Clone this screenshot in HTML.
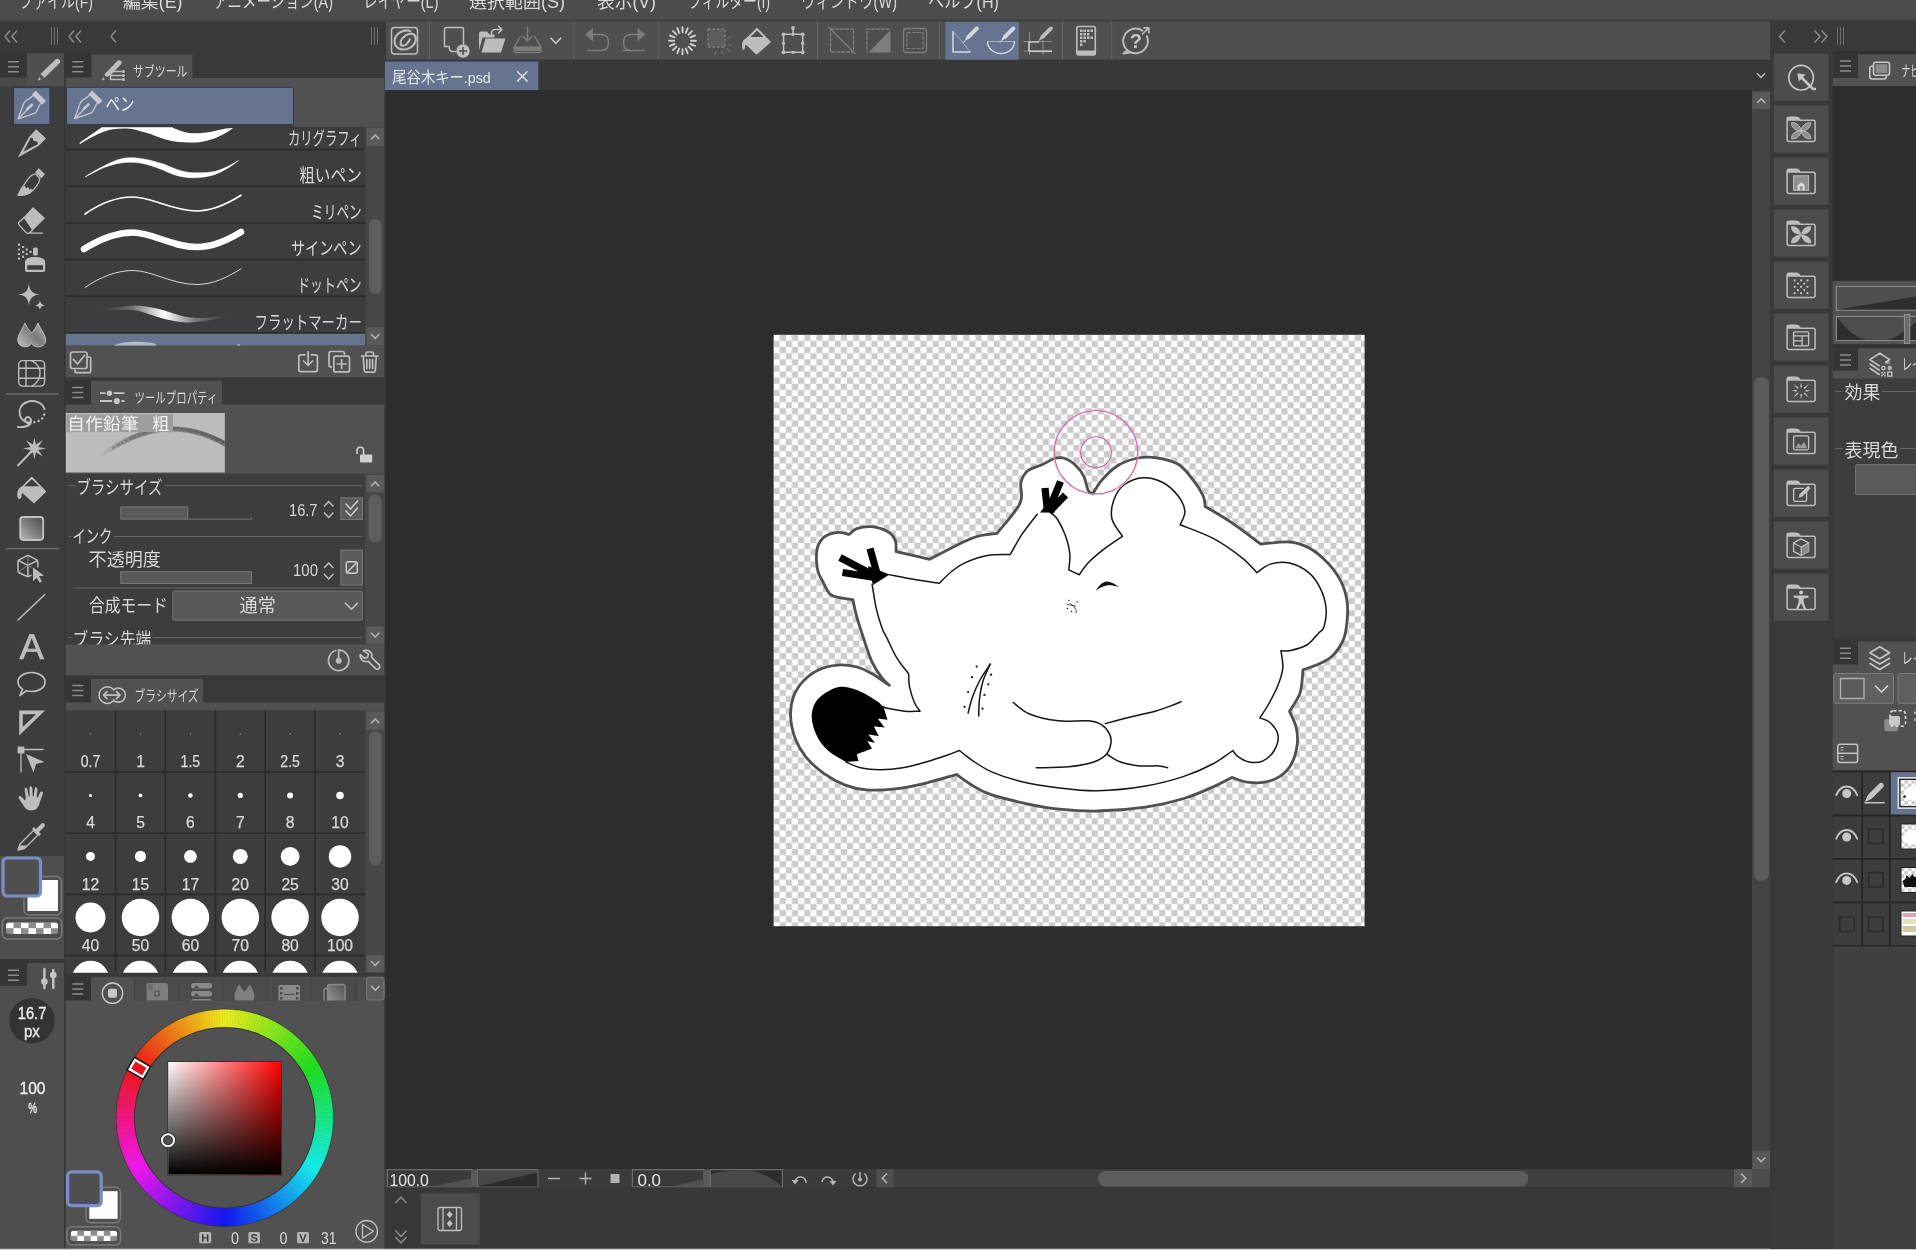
<!DOCTYPE html>
<html lang="ja">
<head>
<meta charset="utf-8">
<title>CLIP STUDIO PAINT</title>
<style>
html,body{margin:0;padding:0;}
body{width:1916px;height:1250px;overflow:hidden;position:relative;background:#393939;
 font-family:"Liberation Sans","Noto Sans CJK JP",sans-serif;color:#d6d6d6;font-size:14px;}
.a{position:absolute;}
.b{position:absolute;box-sizing:border-box;}
svg{position:absolute;overflow:visible;}
.ic{stroke:#bdbdbd;fill:none;stroke-width:1.6;stroke-linecap:round;stroke-linejoin:round;}
.fl{fill:#bdbdbd;stroke:none;}
.t{position:absolute;white-space:nowrap;line-height:1;}
.hdrbox{position:absolute;background:#353535;}
.tab{position:absolute;background:#525252;}
.ham{position:absolute;width:11px;height:1.5px;background:#8a8a8a;box-shadow:0 5px 0 #8a8a8a,0 10px 0 #8a8a8a;}
</style>
</head>
<body>
<svg width="1916" height="1250" viewBox="0 0 1916 1250" style="left:0;top:0;filter:blur(0.45px)">
<defs>
<pattern id="chk" x="773.6" y="334.8" width="12.236" height="12.242" patternUnits="userSpaceOnUse">
<rect width="12.236" height="12.242" fill="#fdfdfd"/>
<rect x="6.118" width="6.118" height="6.121" fill="#cbcbcb"/>
<rect y="6.121" width="6.118" height="6.121" fill="#cbcbcb"/>
</pattern>
<linearGradient id="gdiag" x1="0" y1="1" x2="1" y2="0"><stop offset="0" stop-color="#bcbcbc"/><stop offset=".500" stop-color="#7c7c7c"/><stop offset="1" stop-color="#484848"/></linearGradient>
<g id="ham"><path d="M0 0h11M0 5h11M0 10h11" stroke="#8c8c8c" stroke-width="1.5" fill="none"/></g>
<g id="up"><path d="M-4.100 2.200L0 -2L4.100 2.200" stroke="#b8b8b8" stroke-width="1.5" fill="none"/></g>
<g id="dn"><path d="M-4.100 -2.200L0 2L4.100 -2.200" stroke="#b8b8b8" stroke-width="1.5" fill="none"/></g>
</defs>
<style>
text{font-family:"Liberation Sans","Noto Sans CJK JP",sans-serif;fill:#d8d8d8;}
.i{stroke:#bdbdbd;fill:none;stroke-width:1.6;stroke-linecap:round;stroke-linejoin:round}
.f{fill:#bdbdbd;stroke:none}
.d{stroke:#7d7d7d;fill:none;stroke-width:1.6;stroke-linecap:round;stroke-linejoin:round}
.df{fill:#7d7d7d;stroke:none}
</style>
<!-- base -->
<rect width="1916" height="1250" fill="#393939"/>
<!-- menu bar -->
<rect width="1916" height="19.800" fill="#4c4c4c"/>
<rect y="19.800" width="1916" height="2" fill="#404040"/>
<g font-size="18">
<text x="19" y="8.300" textLength="74" lengthAdjust="spacingAndGlyphs">ファイル(F)</text>
<text x="123" y="8.300" textLength="59.5" lengthAdjust="spacingAndGlyphs">編集(E)</text>
<text x="213.5" y="8.300" textLength="119.5" lengthAdjust="spacingAndGlyphs">アニメーション(A)</text>
<text x="363" y="8.300" textLength="75.5" lengthAdjust="spacingAndGlyphs">レイヤー(L)</text>
<text x="469" y="8.300" textLength="96" lengthAdjust="spacingAndGlyphs">選択範囲(S)</text>
<text x="597" y="8.300" textLength="59" lengthAdjust="spacingAndGlyphs">表示(V)</text>
<text x="688" y="8.300" textLength="82" lengthAdjust="spacingAndGlyphs">フィルター(I)</text>
<text x="801" y="8.300" textLength="96" lengthAdjust="spacingAndGlyphs">ウィンドウ(W)</text>
<text x="928" y="8.300" textLength="71" lengthAdjust="spacingAndGlyphs">ヘルプ(H)</text>
</g>
<!-- left top strip -->
<g stroke="#8a8a8a" stroke-width="1.5" fill="none">
<path d="M10 30.5L5 36.5L10 42.5M17 30.5L12 36.5L17 42.5"/>
<path d="M74 30.5L69 36.5L74 42.5M81 30.5L76 36.5L81 42.5"/>
<path d="M116 30.5L111 36.5L116 42.5"/>
</g>
<g stroke="#6f6f6f" stroke-width="1" fill="none">
<path d="M51.5 27v18M54.5 27v18M57.5 27v18"/>
<path d="M371.5 27v18M374.5 27v18M377.5 27v18"/>
</g>
<!-- ===== tool palette ===== -->
<rect x="0" y="53" width="64" height="33" fill="#4a4a4a"/>
<rect x="0" y="53" width="27" height="24.5" fill="#353535"/>
<rect x="27" y="54.300" width="37" height="31.700" fill="#4f4f4f"/>
<use href="#ham" x="8" y="61.7"/>
<path d="M38 80.5l2.5-6.5 15-14.5c1.2-1.2 3-1 4 .2 1 1.200 1 2.800-.2 3.800l-15 14.500z" class="f"/>
<path d="M38 80.500l2.500-6.500 4 4z" fill="#4f4f4f"/><path d="M38 80.500l1.200-3.200 2 2z" class="f"/>
<rect x="0" y="86" width="64" height="770" fill="#3d3d3d"/>
<rect x="64" y="53" width="1.500" height="1197" fill="#343434"/>
<!-- pen selected -->
<rect x="13.500" y="87.500" width="36.500" height="37" fill="#67748f" stroke="#303850" stroke-width="1.200"/>
<g>
<path class="i" d="M18 119L23.800 103.200Q24.200 102 25.300 101.200L34.600 94.600M18 119L34.300 113.400Q35.500 113 36.200 111.800L40.300 104M18.500 118.500L29.500 107.500" style="stroke:#c4c8d4;stroke-width:1.300"/>
<path d="M27.300 109L32 104.800" stroke="#c4c8d4" stroke-width="2.600" stroke-linecap="round"/>
<path d="M35.600 90.800L46 101L42 104.800L32 94.600z" fill="#c4c8d4"/>
</g>
<!-- pencil -->
<path class="f" fill-rule="evenodd" d="M17.800 157.500L29 137L36.200 129.200L46 138.400L38.800 145.800zM23.300 151.800L30.600 138Q32.600 136.600 33 139Q33 141.500 35.500 141.200Q37.600 140.800 37.700 143.200L37.800 144.200z"/>
<!-- brush -->
<path class="i" d="M18 195.300C19.500 191 22 187 24.700 183.800C27 180.500 29 177.500 31.100 175.800C32.500 174.600 34 174 35.600 173.800L39.800 178.500C39.800 181 38.500 183.500 36.900 185.700C35 188.500 32 191.500 29.200 193.400C26 195 22 195.600 18 195.300z" style="stroke-width:1.300"/>
<path class="f" d="M18 195.300C19.500 191 22 187.500 24.800 185.800L26.300 188.300L28.300 186.800L29.300 189.800L31.300 188.200L31.800 190.300L33.800 189.300C32 191.500 30.500 192.600 29.200 193.400C26 195 22 195.600 18 195.300z"/>
<path class="f" d="M38.800 168.200L45 174.200L41.400 178.200L35.200 172.200z"/>
<!-- eraser -->
<path class="f" d="M33 207L45 218.300L32.500 230.500L23.500 217.500z"/>
<path class="i" d="M23.800 217.700L18.800 222.500Q17.800 223.500 18.800 224.600L26.600 233.100L29.200 233.100L32.500 230M26.600 233.100L42.600 233.100" style="stroke-width:1.300"/>
<!-- airbrush -->
<g class="f">
<rect x="33" y="247.600" width="4.800" height="8" rx="1.500"/>
<path fill-rule="evenodd" d="M25 262.500C25 258.500 29 257 35.100 257S45.200 258.500 45.200 262.500V270Q45.200 272 43.200 272H27Q25 272 25 270zM27.300 265.200H43V269.700H27.300z"/>
<rect x="17.900" y="243.600" width="2.200" height="2.200" rx=".6"/><rect x="22" y="245.900" width="2.200" height="2.200" rx=".6"/><rect x="17.900" y="248.400" width="2.200" height="2.200" rx=".6"/><rect x="25.700" y="248.400" width="2.200" height="2.200" rx=".6"/><rect x="22" y="250.700" width="2.200" height="2.200" rx=".6"/><rect x="29.500" y="250.700" width="2.200" height="2.200" rx=".6"/><rect x="17.900" y="252.900" width="2.200" height="2.200" rx=".6"/><rect x="25.700" y="252.900" width="2.200" height="2.200" rx=".6"/><rect x="22" y="255.500" width="2.200" height="2.200" rx=".6"/><rect x="17.900" y="257.500" width="2.200" height="2.200" rx=".6"/>
</g>
<!-- sparkle -->
<path class="f" d="M28.900 283Q29.400 294.200 40.200 294.600Q29.400 295 28.900 306Q28.400 295 17.600 294.600Q28.400 294.200 28.900 283zM28.900 288.500Q28.900 294.600 34 294.600Q28.900 294.600 28.900 300.500Q28.900 294.600 23.500 294.600Q28.900 294.600 28.900 288.500zM39.900 300.300Q40.200 305 45.200 305.200Q40.200 305.400 39.900 310.400Q39.600 305.400 34.800 305.200Q39.600 305 39.900 300.300z"/>
<!-- blend -->
<linearGradient id="gbl" x1="0" y1="1" x2="1" y2="0.200"><stop offset="0" stop-color="#c2c2c2"/><stop offset="0.600" stop-color="#7a7a7a"/><stop offset="1" stop-color="#b0b0b0"/></linearGradient>
<path d="M25 323C22 330 17.800 335 17.800 340C17.800 345 22 346.800 25.500 346.800C28 346.800 30.500 345.500 31.600 343.500C32.700 345.500 35 346.800 38 346.800C42 346.800 45.600 345 45.600 340C45.600 335 41 330 38 323C36 328 33.500 331 31.600 333C29.500 331 27 328 25 323z" fill="url(#gbl)" stroke="#bdbdbd" stroke-width="1"/>
<!-- mesh -->
<g class="i" style="stroke-width:1.400">
<rect x="18.700" y="360.600" width="25.900" height="25.500" rx="4"/>
<path d="M26 360.600v25.500M18.700 368.200h25.900M18.700 378.200h25.900M32.100 360.800C37.500 364 40.100 368 40.100 372.500C40.100 378 37 383 32.400 386"/>
</g>
<!-- separators -->
<rect x="6" y="393.300" width="53" height="1.500" fill="#6a6a6a"/>
<rect x="6" y="547.800" width="53" height="1.500" fill="#6a6a6a"/>
<!-- lasso -->
<g class="i" style="stroke-width:1.900">
<path d="M44.500 409C42.500 402.500 34 399.500 27 402C20.500 404.500 18.500 410 20 415.500C21.500 420 25.500 422.700 30.500 422.500"/>
<path d="M44.300 413.500C44 417 41.500 419.800 38.500 421C36 422 33.500 422.400 31.500 422.500" stroke-width="2.300" stroke-dasharray="2 2.300" stroke-linecap="butt"/>
<path d="M30.500 422.500C32.500 418 27.500 415.500 25.500 418.500C23.500 422 29 424.500 30.800 422.500C30 426 24 427.500 18 427"/>
</g>
<!-- wand -->
<path class="i" d="M18 465.500L32 451" style="stroke-width:1.900"/>
<path class="f" d="M34.400 437.500L35.900 444.600L42.800 440.200L38.200 446.900L46 448.400L38.200 449.900L42.800 456.600L35.900 452.200L34.400 459.500L32.900 452.200L26 456.600L30.600 449.900L23 448.400L30.600 446.900L26 440.200L32.900 444.600z"/>
<!-- bucket -->
<path d="M31.800 477.500L45.300 491.500L34 502.500L23.500 493Q20.800 491.500 20.800 495Q20.800 498.300 19.300 498.300Q18 498.300 18 494Q18 489 22.500 487z" fill="#bdbdbd" stroke="#bdbdbd" stroke-width="1.600" stroke-linejoin="round"/>
<path d="M31.800 479.200L24.300 486.300h15z" fill="#3d3d3d"/>
<!-- gradient -->
<rect x="20.200" y="517" width="23" height="23" rx="3.200" fill="url(#gdiag)" stroke="#c2c2c2" stroke-width="1.800"/>
<!-- 3d cube + cursor -->
<g class="i" style="stroke-width:1.500">
<path d="M37.800 567V561.500Q37.800 560.400 36.800 559.900L29 555.800Q27.900 555.300 26.800 555.800L19 559.900Q18 560.400 18 561.500V571Q18 572.200 19 572.700L26.800 576.300Q27.900 576.800 29 576.300L31 575.300"/>
<path d="M18.500 560.500L27.900 565.300L37.300 560.500M27.900 565.300V576.500"/>
<path d="M27.900 555.800V565.300M27.900 565.300L19 571.500M27.900 565.300L32 567.300" stroke-width=".900" stroke="#8e8e8e"/>
</g>
<path class="f" d="M33 567.500L44 575.500L38.900 576.300L42 581.600L39.600 582.800L36.600 577.700L33 581.300z"/>
<!-- line -->
<path class="i" d="M18 620L44.800 594.500" style="stroke-width:1.500"/>
<!-- A -->
<g transform="rotate(0.03 31 646)"><text x="19.400" y="659" font-size="36" textLength="24.300" lengthAdjust="spacingAndGlyphs" style="fill:#bdbdbd;stroke:#bdbdbd;stroke-width:.7px">A</text></g>
<!-- balloon -->
<path class="i" d="M31.500 672.500C39 672.500 45 676.500 45 682C45 687.500 39 691.500 31.500 691.500C29.500 691.500 27.800 691.300 26 690.800L20 695.500L22.500 689C19.500 687.300 18 685 18 682C18 676.500 24 672.500 31.500 672.500z" style="stroke-width:1.700"/>
<!-- ruler triangle -->
<path class="f" d="M19.200 710.500L45 710.500L19.200 735.500zM22.800 714.200L22.800 727L36 714.200z" fill-rule="evenodd"/>
<!-- operation -->
<rect x="17.600" y="746.600" width="6.800" height="6.800" class="f"/>
<path class="i" d="M24 749.500H43M21 753V772" style="stroke-width:1.300"/>
<path class="f" d="M26 754L44.500 762L36 764L33.500 772.500z"/>
<!-- hand -->
<path class="f" d="M25.800 798L24.600 789.500Q24.400 787.800 25.700 787.700Q27 787.600 27.300 789.200L28.800 796.500L29.600 796.400L29.400 787.700Q29.400 786.200 30.800 786.200Q32.200 786.200 32.300 787.700L32.800 796.400L33.600 796.500L34.800 788.500Q35 787.200 36.300 787.400Q37.600 787.600 37.500 789L36.800 797.500L37.600 797.800L40.300 792.300Q41 791 42.200 791.600Q43.400 792.200 42.900 793.600L39.800 802.500Q37.800 810.500 31.500 810.500Q26.500 810.500 23.800 806L18.700 798.300Q18 797 19.200 796.300Q20.400 795.600 21.500 796.800L25 800.500z"/>
<!-- eyedropper -->
<path class="i" d="M18 850L20 844L33.500 830.500L38 835L24.500 848.500z" style="stroke-width:1.300"/>
<path class="f" d="M18 850L19.500 845.500L27 845.500L23.500 848.800zM32 829L34 827L36 829L41.500 823.500Q43 822.500 44.300 823.700Q45.500 825 44.500 826.500L39 832L41 834L39 836z"/>
<!-- color area -->
<rect x="0" y="856" width="64" height="103" fill="#4e4e4e"/>
<rect x="24" y="876.500" width="37.500" height="38.500" rx="5" fill="none" stroke="#7a7a7a" stroke-width="1.500"/>
<rect x="27.500" y="880" width="30.500" height="31" fill="#fff"/>
<rect x="3" y="858" width="37.500" height="38" rx="4" fill="#4f4f4f" stroke="#7b8fc6" stroke-width="3.200"/>
<rect x="2.300" y="918" width="59.400" height="21" rx="5" fill="none" stroke="#7a7a7a" stroke-width="1.500"/>
<pattern id="chk2" x="6" y="922.400" width="15" height="11.600" patternUnits="userSpaceOnUse"><rect width="15" height="11.600" fill="#fff"/><rect x="7.500" width="7.500" height="5.800" fill="#8c8c8c"/><rect y="5.800" width="7.500" height="5.800" fill="#8c8c8c"/></pattern>
<rect x="6" y="922.400" width="52" height="11.600" rx="3" fill="url(#chk2)"/>
<!-- ===== quick access (lower-left of tool palette) ===== -->
<rect x="0" y="959" width="64" height="4" fill="#363636"/>
<rect x="0" y="963" width="64" height="287" fill="#4e4e4e"/>
<rect x="0" y="963" width="27" height="23" fill="#353535"/>
<use href="#ham" x="8" y="970.300"/>
<g>
<path d="M44.400 969v19M53.300 969v19" stroke="#c6c6c6" stroke-width="2.400" stroke-linecap="round"/>
<circle cx="44.400" cy="981.500" r="3.300" fill="#c6c6c6"/><circle cx="53.300" cy="975" r="3.300" fill="#c6c6c6"/>
<rect x="52" y="966.500" width="2.600" height="2.600" fill="#4e4e4e"/>
</g>
<circle cx="31.900" cy="1020.800" r="22.800" fill="#333"/>
<g style="stroke:#ececec;stroke-width:.35px"><text x="17.800" y="1018.600" font-size="16.500" textLength="28.500" lengthAdjust="spacingAndGlyphs" style="fill:#ececec">16.7</text>
<text x="24" y="1037.200" font-size="16.500" textLength="15.800" lengthAdjust="spacingAndGlyphs" style="fill:#ececec">px</text>
<text x="19.500" y="1094.200" font-size="16.500" textLength="26" lengthAdjust="spacingAndGlyphs" style="fill:#ececec">100</text>
<text x="28.300" y="1113" font-size="14.500" textLength="8.800" lengthAdjust="spacingAndGlyphs" style="fill:#ececec">%</text></g>
<!-- ===== sub tool panel ===== -->
<rect x="65.500" y="54.300" width="319" height="32.700" fill="#515151"/>
<rect x="192.500" y="53" width="192" height="25" fill="#393939"/>
<rect x="65.500" y="53" width="26" height="24.500" fill="#353535"/>
<rect x="65.500" y="86" width="319" height="41" fill="#515151"/>
<use href="#ham" x="72.300" y="61.700"/>
<!-- subtool tab icon -->
<g>
<path class="f" d="M102 80.500l2.300-6 13-13.500c1.100-1.100 2.800-1 3.700.100.900 1.100.900 2.500-.200 3.500l-9 9.500-4 2.500z"/>
<path d="M102 80.500l2.300-6 3.600 3.800z" fill="#515151"/><path class="f" d="M102 80.500l1.100-3 1.900 2z"/>
<path d="M110.500 71.500h12.500M110.500 75.500h12.500M110.500 79.500h12.500M110.500 71v9" stroke="#bdbdbd" stroke-width="1.400" fill="none"/>
<circle cx="123.500" cy="71.500" r="1.500" class="f"/><circle cx="123.500" cy="75.500" r="1.500" class="f"/><circle cx="123.500" cy="79.500" r="1.500" class="f"/>
</g>
<text x="133" y="76" font-size="14" textLength="54.500" lengthAdjust="spacingAndGlyphs">サブツール</text>
<!-- pen group button -->
<rect x="66.500" y="87.300" width="227" height="37.200" rx="2" fill="#67748f" stroke="#303850" stroke-width="1"/>
<g transform="translate(56.500,-0.300)">
<path class="i" d="M18 119L23.800 103.200Q24.200 102 25.300 101.200L34.600 94.600M18 119L34.300 113.400Q35.500 113 36.200 111.800L40.300 104M18.500 118.500L29.500 107.500" style="stroke:#c4c8d4;stroke-width:1.300"/>
<path d="M27.300 109L32 104.800" stroke="#c4c8d4" stroke-width="2.600" stroke-linecap="round"/>
<path d="M35.600 90.800L46 101L42 104.800L32 94.600z" fill="#c4c8d4"/>
</g>
<text x="105.500" y="111.300" font-size="18.200" textLength="29" lengthAdjust="spacingAndGlyphs" style="fill:#e8eaf0">ペン</text>
<!-- list -->
<rect x="66" y="124.600" width="227.800" height="2.800" fill="#3a3a3a"/>
<clipPath id="cl1"><rect x="65.500" y="127.300" width="300" height="218.500"/></clipPath>
<rect x="65.500" y="127.300" width="300" height="218.500" fill="#3d3d3d"/>
<g clip-path="url(#cl1)">
<g fill="#2a2a2a">
<rect x="65.500" y="148.800" width="300" height="1.500"/><rect x="65.500" y="185.500" width="300" height="1.500"/><rect x="65.500" y="222.200" width="300" height="1.500"/><rect x="65.500" y="258.900" width="300" height="1.500"/><rect x="65.500" y="295.600" width="300" height="1.500"/><rect x="65.500" y="332.300" width="300" height="1.500"/>
</g>
<rect x="65.500" y="333.800" width="300" height="12" fill="#67748f"/>
<!-- strokes -->
<path d="M79.200 143L100.800 128L105 124L170 124L173.100 128C177 129.500 180 130.800 183.400 131.700C188 133 193 133.400 197.500 133.200C202 133 207 132.500 211.600 131.700C217 130.500 221 129.500 225.700 128.500L233.200 128C229 131 225 133.500 221 135.500C216 138 211 139.800 206.900 140.700C202 142 197 142.500 192.800 142.500C188 142.600 183 142.500 178.700 142.100C174 141.500 169 140.500 164.600 139.300C160 138 155 136 150.600 134.100C146 132.500 141 131 136.500 129.900C132 128.800 127 128.400 122.400 128.500C117 128.700 112 129.300 108.300 130.300C103 131.800 98 134 94.200 136C89 138.500 84 141.500 80.100 144z" fill="#fff"/>
<path d="M85 177C92 172 98 169 104 166C112 161.500 121 158 129 157.700C140 157.500 150 160 163.500 164C172 167.500 180 171.500 189.500 172.500C198 173 207 173 215 171.500C224 169 232 164.500 238.500 160.500C232 166 224 171 215 174.500C207 177 198 178.200 189.500 177.700C179 177 170 173.500 163 170C152 165.500 141 162 129 162.300C120 162.500 112 164.500 104 167.500C98 170 92 173.500 85 177z" fill="#fff" stroke="#fff" stroke-width=".500" stroke-linejoin="round"/>
<path d="M85 214C100 203.500 117 197 133 197C152 197 172 211 197 211C213 211 228 203.500 241 195.300" fill="none" stroke="#fff" stroke-width="1.700" stroke-linecap="round"/>
<path d="M84 249C100 239 117 232.500 133 232.500C152 232.500 172 247 197 247C213 247 228 240 241 232" fill="none" stroke="#fff" stroke-width="6.600" stroke-linecap="round"/>
<path d="M85 287.500C100 277 117 270.500 133 270.500C152 270.500 172 284.500 197 284.500C213 284.500 228 277 241 268.800" fill="none" stroke="#e8e8e8" stroke-width=".900" stroke-linecap="round"/>
<linearGradient id="gfm" x1="0" y1="0" x2="1" y2="0"><stop offset="0" stop-color="#fff" stop-opacity="0"/><stop offset=".250" stop-color="#fff" stop-opacity=".250"/><stop offset=".500" stop-color="#fff" stop-opacity="1"/><stop offset=".750" stop-color="#fff" stop-opacity=".300"/><stop offset="1" stop-color="#fff" stop-opacity="0"/></linearGradient>
<path d="M100 310.800C112 308 124 306 134 305.500C150 305.500 166 311 180 315.500C196 319.500 212 318 228 315.500C214 320 198 322.500 186 322.500C170 322 154 315.500 138 310.800C126 309 112 310 100 310.800z" fill="url(#gfm)"/>
<path d="M113 346C120 341.500 140 340.500 155 343.500L157 346zM236 346l3-2.500 1.500 2.500z" fill="#dfe2ea" opacity=".650"/>
</g>
<g font-size="18.200">
<text x="288" y="145.300" textLength="73.600" lengthAdjust="spacingAndGlyphs">カリグラフィ</text>
<text x="299.200" y="182" textLength="62.600" lengthAdjust="spacingAndGlyphs">粗いペン</text>
<text x="311.200" y="218.700" textLength="50.500" lengthAdjust="spacingAndGlyphs">ミリペン</text>
<text x="290.900" y="255.400" textLength="70.800" lengthAdjust="spacingAndGlyphs">サインペン</text>
<text x="297.200" y="292.100" textLength="64.500" lengthAdjust="spacingAndGlyphs">ドットペン</text>
<text x="254.600" y="328.800" textLength="107.200" lengthAdjust="spacingAndGlyphs">フラットマーカー</text>
</g>
<!-- list scrollbar -->
<rect x="365.500" y="127.300" width="19" height="218.500" fill="#474747"/>
<rect x="366.500" y="127.700" width="17.300" height="18.200" fill="#5a5a5a"/><use href="#up" x="375.200" y="137"/>
<rect x="366.500" y="327.300" width="17.300" height="18.200" fill="#5a5a5a"/><use href="#dn" x="375.200" y="336.500"/>
<rect x="369" y="219" width="12.500" height="75" rx="6.200" fill="#5d5d5d"/>
<!-- bottom bar -->
<rect x="65.500" y="345.800" width="319" height="31.500" fill="#515151"/>
<g class="i" style="stroke-width:1.700">
<path d="M75 370v1q0 1.700 1.700 1.700h12.300q1.700 0 1.700-1.700v-12.300q0-1.700-1.700-1.700h-1"/>
<rect x="70.500" y="352" width="16.500" height="16.500" rx="2"/><path d="M73.500 359.500l4 4.500 7-8.500"/>
<rect x="298.800" y="354.800" width="18.600" height="16.800" rx="2"/><path d="M308.100 351v5" stroke="#515151" stroke-width="5"/><path d="M308.100 351.500v13.500M303.600 361l4.500 4.500 4.500-4.500"/>
<path d="M331.500 367q-2.500 0-2.500-2v-11.500q0-2 2-2h11.500q2 0 2 2.500"/><rect x="333.800" y="356.200" width="15.700" height="15.700" rx="2"/><path d="M341.600 359.700v8.700M337.200 364h8.800"/>
<path d="M361.500 356h16.500M366 355.500v-2q0-1.500 1.500-1.500h4.500q1.500 0 1.500 1.500v2M363.200 356l1 14.500q.1 1.700 1.800 1.700h7.500q1.700 0 1.800-1.700l1-14.500M366.800 359.500v9M369.700 359.500v9M372.600 359.500v9"/>
</g>
<!-- ===== tool property panel ===== -->
<rect x="65.500" y="380.800" width="319" height="294.500" fill="#515151"/>
<rect x="222" y="380.800" width="162.500" height="23.700" fill="#393939"/>
<rect x="65.500" y="380.800" width="25.500" height="23.700" fill="#353535"/>
<use href="#ham" x="72.300" y="387.600"/>
<g stroke="#c4c4c4" stroke-width="1.800" fill="none"><path d="M100 393.200h5.500M113.500 393.200h11M100 401h12M121.500 401h3"/></g>
<circle cx="109.400" cy="393.200" r="2.700" fill="#c4c4c4"/><circle cx="116.800" cy="401" r="3.100" fill="#c4c4c4"/>
<text x="134.400" y="403" font-size="14.500" textLength="83" lengthAdjust="spacingAndGlyphs">ツールプロパティ</text>
<!-- preview -->
<rect x="65.800" y="413" width="159" height="59.500" fill="#bdbdbd"/>
<clipPath id="cl2"><rect x="65.800" y="413" width="159" height="59.500"/></clipPath>
<g clip-path="url(#cl2)">
<linearGradient id="gps" x1="0" y1="0" x2="1" y2="0"><stop offset="0" stop-color="#777" stop-opacity="0"/><stop offset=".300" stop-color="#747474" stop-opacity=".800"/><stop offset="1" stop-color="#666" stop-opacity="1"/></linearGradient>
<path d="M99 456.500C118 443 140 432 163 429C186 427.500 208 434 226 444.500" fill="none" stroke="url(#gps)" stroke-width="5" stroke-linecap="round"/>
<path d="M112 448.500C130 437.500 146 431 163 428.500C186 427 208 433.500 226 443.500" fill="none" stroke="#505050" stroke-width="2.200" stroke-dasharray="3 1.500 5 1 2 2" opacity=".450"/>
<path d="M118 447C134 438 148 433 163 431C186 429.500 208 436 226 446" fill="none" stroke="#8a8a8a" stroke-width="1.200" stroke-dasharray="2 3 4 2" opacity=".600"/>
</g>
<rect x="66.500" y="414.200" width="106.500" height="18" fill="#9d9d9d"/>
<g transform="rotate(0.03 67 430)"><text x="67.300" y="430" font-size="17.500" style="fill:#f2f2f2;letter-spacing:.4px;word-spacing:7.900px">自作鉛筆 粗</text></g>
<!-- unlock icon -->
<rect x="360" y="454.400" width="12.200" height="8" rx="1" fill="#d0d0d0"/>
<path d="M357 454v-3.500a3.300 3.300 0 0 1 6.600 0V455" fill="none" stroke="#d0d0d0" stroke-width="1.600"/>
<!-- list -->
<rect x="65.500" y="473.800" width="300" height="170.600" fill="#3d3d3d"/>
<rect x="365.500" y="473.800" width="19" height="170.600" fill="#474747"/>
<rect x="366.500" y="475" width="17.300" height="17.300" fill="#5a5a5a"/><use href="#up" x="375.200" y="484"/>
<rect x="366.500" y="626.400" width="17.300" height="17.300" fill="#5a5a5a"/><use href="#dn" x="375.200" y="635"/>
<rect x="368.500" y="494.500" width="13" height="48" rx="6.500" fill="#5d5d5d"/>
<g fill="#666">
<rect x="68.600" y="485.200" width="7" height="1"/><rect x="164.500" y="485.200" width="197" height="1"/>
<rect x="68.600" y="536" width="3" height="1"/><rect x="114" y="536" width="247.500" height="1"/>
<rect x="73.800" y="587.500" width="289" height="1"/>
<rect x="68.600" y="637" width="3" height="1"/><rect x="153" y="637" width="208.500" height="1"/>
</g>
<clipPath id="cl3"><rect x="65.500" y="473.800" width="300" height="170.600"/></clipPath>
<g font-size="18.200" clip-path="url(#cl3)">
<text x="76.400" y="494" textLength="86" lengthAdjust="spacingAndGlyphs">ブラシサイズ</text>
<text x="72.600" y="543.400" textLength="39.800" lengthAdjust="spacingAndGlyphs">インク</text>
<text x="88.600" y="566.300" textLength="72.300" lengthAdjust="spacingAndGlyphs">不透明度</text>
<text x="88.900" y="612.100" textLength="79" lengthAdjust="spacingAndGlyphs">合成モード</text>
<text x="72.600" y="645.800" textLength="78.600" lengthAdjust="spacingAndGlyphs">ブラシ先端</text>
</g>
<!-- brush size slider -->
<rect x="120.800" y="506.900" width="67" height="12.200" fill="#5a5a5a" stroke="#787878" stroke-width="1"/>
<path d="M188 519.100H251.500v-1.500" fill="none" stroke="#787878" stroke-width="1"/>
<text x="289" y="515.500" font-size="16.700" textLength="28.500" lengthAdjust="spacingAndGlyphs">16.7</text>
<g stroke="#c0c0c0" stroke-width="1.400" fill="none"><path d="M324 506.500l4.700-5 4.700 5M324 512.500l4.700 5 4.700-5"/><path d="M324 568l4.700-5 4.700 5M324 574l4.700 5 4.700-5"/></g>
<rect x="340.900" y="497.900" width="21.500" height="21.500" fill="#5a5a5a" stroke="#7a7a7a" stroke-width="1"/>
<path d="M345.500 503.500l5 5.500 7.500-8.500M345.500 510.500l5 5.500 7.500-8.500" fill="none" stroke="#d0d0d0" stroke-width="1.500"/>
<!-- opacity slider -->
<rect x="120.800" y="571.700" width="130.700" height="11.800" fill="#5a5a5a" stroke="#787878" stroke-width="1"/>
<text x="293" y="576" font-size="16.700" textLength="25" lengthAdjust="spacingAndGlyphs">100</text>
<rect x="340.900" y="550.100" width="21.500" height="35" fill="#5a5a5a" stroke="#7a7a7a" stroke-width="1"/>
<rect x="346.300" y="561.700" width="11" height="11.500" rx="2" fill="none" stroke="#d0d0d0" stroke-width="1.400"/><path d="M347 572.500l9.700-10" stroke="#d0d0d0" stroke-width="1.400"/>
<!-- combo -->
<rect x="172.800" y="591.100" width="189.600" height="29.200" rx="1.500" fill="#585858" stroke="#727272" stroke-width="1"/>
<text x="239.500" y="612.100" font-size="18.200" textLength="36.300" lengthAdjust="spacingAndGlyphs">通常</text>
<path d="M345 602.700l6.500 6.500 6.500-6.500" fill="none" stroke="#c8c8c8" stroke-width="1.500"/>
<!-- bottom bar icons -->
<g class="i" style="stroke-width:1.700">
<path d="M338.700 650.200a10.200 10.200 0 1 1-8.800 5" /><path d="M330.300 654.500a10.200 10.200 0 0 1 5.400-4" stroke-dasharray="1.400 1.800"/><path d="M338.700 650.200v10"/>
</g>
<circle cx="338.700" cy="660.800" r="3" class="f"/>
<path class="i" d="M363.500 650.800a5.800 5.800 0 0 1 8.200 6.600l7.300 7.300a2.600 2.600 0 0 1-3.700 3.700l-7.300-7.200a5.800 5.800 0 0 1-7.700-6.700l4 3.700 3.300-.8.800-3.300z" style="stroke-width:1.700"/>
<!-- ===== brush size panel ===== -->
<rect x="65.500" y="679" width="319" height="293.700" fill="#515151"/>
<rect x="203" y="678.500" width="181.500" height="23.900" fill="#393939"/>
<rect x="65.500" y="679" width="25.500" height="23.400" fill="#353535"/>
<use href="#ham" x="72.300" y="685.600"/>
<g class="i" style="stroke-width:1.700"><circle cx="107.400" cy="695.100" r="8.300"/><circle cx="118.300" cy="695.100" r="7"/></g><circle cx="107.400" cy="695.100" r="7.450" fill="#515151"/><circle cx="118.300" cy="695.100" r="6.150" fill="#515151"/><g class="i" style="stroke-width:1.700"><path d="M103.500 695.100h16.500M107 691.600l-3.500 3.500 3.500 3.500M116.500 691.600l3.500 3.500-3.500 3.500"/></g>
<text x="134.600" y="700.800" font-size="14.500" textLength="64" lengthAdjust="spacingAndGlyphs">ブラシサイズ</text>
<rect x="65.500" y="710.300" width="300" height="262.400" fill="#3d3d3d"/>
<clipPath id="cl4"><rect x="65.500" y="710.300" width="300" height="262.400"/></clipPath>
<g clip-path="url(#cl4)">
<g fill="#2a2a2a">
<rect x="114.85" y="710.300" width="1.500" height="262.400"/>
<rect x="164.65" y="710.300" width="1.500" height="262.400"/>
<rect x="214.65" y="710.300" width="1.500" height="262.400"/>
<rect x="264.45" y="710.300" width="1.500" height="262.400"/>
<rect x="314.25" y="710.300" width="1.500" height="262.400"/>
<rect x="65.500" y="771.25" width="300" height="1.500"/>
<rect x="65.500" y="832.45" width="300" height="1.500"/>
<rect x="65.500" y="893.65" width="300" height="1.500"/>
<rect x="65.500" y="954.85" width="300" height="1.500"/>
</g>
<circle cx="90.5" cy="734" r="0.700" fill="#fff" opacity="0.33"/>
<circle cx="140.5" cy="734" r="0.700" fill="#fff" opacity="0.37"/>
<circle cx="190.4" cy="734" r="0.700" fill="#fff" opacity="0.43"/>
<circle cx="240.3" cy="734" r="0.700" fill="#fff" opacity="0.49"/>
<circle cx="290.1" cy="734" r="0.700" fill="#fff" opacity="0.55"/>
<circle cx="340.0" cy="734" r="0.700" fill="#fff" opacity="0.61"/>
<circle cx="90.5" cy="795.4" r="1.50" fill="#fff"/>
<circle cx="140.5" cy="795.4" r="1.88" fill="#fff"/>
<circle cx="190.4" cy="795.4" r="2.25" fill="#fff"/>
<circle cx="240.3" cy="795.4" r="2.62" fill="#fff"/>
<circle cx="290.1" cy="795.4" r="3.00" fill="#fff"/>
<circle cx="340.0" cy="795.4" r="3.75" fill="#fff"/>
<circle cx="90.5" cy="856.4" r="4.50" fill="#fff"/>
<circle cx="140.5" cy="856.4" r="5.62" fill="#fff"/>
<circle cx="190.4" cy="856.4" r="6.38" fill="#fff"/>
<circle cx="240.3" cy="856.4" r="7.50" fill="#fff"/>
<circle cx="290.1" cy="856.4" r="9.38" fill="#fff"/>
<circle cx="340.0" cy="856.4" r="11.25" fill="#fff"/>
<circle cx="90.5" cy="917.5" r="15.00" fill="#fff"/>
<circle cx="140.5" cy="917.5" r="18.75" fill="#fff"/>
<circle cx="190.4" cy="917.5" r="18.75" fill="#fff"/>
<circle cx="240.3" cy="917.5" r="18.75" fill="#fff"/>
<circle cx="290.1" cy="917.5" r="18.75" fill="#fff"/>
<circle cx="340.0" cy="917.5" r="18.75" fill="#fff"/>
<circle cx="90.5" cy="979.400" r="18.750" fill="#fff"/>
<circle cx="140.5" cy="979.400" r="18.750" fill="#fff"/>
<circle cx="190.4" cy="979.400" r="18.750" fill="#fff"/>
<circle cx="240.3" cy="979.400" r="18.750" fill="#fff"/>
<circle cx="290.1" cy="979.400" r="18.750" fill="#fff"/>
<circle cx="340.0" cy="979.400" r="18.750" fill="#fff"/>
</g>
<g font-size="16" text-anchor="middle" style="stroke:#dcdcdc;stroke-width:.25px">
<text x="90.5" y="767.2" textLength="19.6" lengthAdjust="spacingAndGlyphs">0.7</text>
<text x="140.5" y="767.2" textLength="8.7" lengthAdjust="spacingAndGlyphs">1</text>
<text x="190.4" y="767.2" textLength="19.6" lengthAdjust="spacingAndGlyphs">1.5</text>
<text x="240.3" y="767.2" textLength="8.7" lengthAdjust="spacingAndGlyphs">2</text>
<text x="290.1" y="767.2" textLength="19.6" lengthAdjust="spacingAndGlyphs">2.5</text>
<text x="340.0" y="767.2" textLength="8.7" lengthAdjust="spacingAndGlyphs">3</text>
<text x="90.5" y="828.4" textLength="8.7" lengthAdjust="spacingAndGlyphs">4</text>
<text x="140.5" y="828.4" textLength="8.7" lengthAdjust="spacingAndGlyphs">5</text>
<text x="190.4" y="828.4" textLength="8.7" lengthAdjust="spacingAndGlyphs">6</text>
<text x="240.3" y="828.4" textLength="8.7" lengthAdjust="spacingAndGlyphs">7</text>
<text x="290.1" y="828.4" textLength="8.7" lengthAdjust="spacingAndGlyphs">8</text>
<text x="340.0" y="828.4" textLength="17.4" lengthAdjust="spacingAndGlyphs">10</text>
<text x="90.5" y="889.6" textLength="17.4" lengthAdjust="spacingAndGlyphs">12</text>
<text x="140.5" y="889.6" textLength="17.4" lengthAdjust="spacingAndGlyphs">15</text>
<text x="190.4" y="889.6" textLength="17.4" lengthAdjust="spacingAndGlyphs">17</text>
<text x="240.3" y="889.6" textLength="17.4" lengthAdjust="spacingAndGlyphs">20</text>
<text x="290.1" y="889.6" textLength="17.4" lengthAdjust="spacingAndGlyphs">25</text>
<text x="340.0" y="889.6" textLength="17.4" lengthAdjust="spacingAndGlyphs">30</text>
<text x="90.5" y="950.8" textLength="17.4" lengthAdjust="spacingAndGlyphs">40</text>
<text x="140.5" y="950.8" textLength="17.4" lengthAdjust="spacingAndGlyphs">50</text>
<text x="190.4" y="950.8" textLength="17.4" lengthAdjust="spacingAndGlyphs">60</text>
<text x="240.3" y="950.8" textLength="17.4" lengthAdjust="spacingAndGlyphs">70</text>
<text x="290.1" y="950.8" textLength="17.4" lengthAdjust="spacingAndGlyphs">80</text>
<text x="340.0" y="950.8" textLength="26.1" lengthAdjust="spacingAndGlyphs">100</text>
</g>
<rect x="365.500" y="710.300" width="19" height="262.400" fill="#474747"/>
<rect x="366.500" y="711.700" width="17.300" height="17.700" fill="#5a5a5a"/><use href="#up" x="375.200" y="721"/>
<rect x="366.500" y="955" width="17.300" height="17.200" fill="#5a5a5a"/><use href="#dn" x="375.200" y="963.500"/>
<rect x="369" y="731.300" width="12.500" height="134" rx="6.200" fill="#5d5d5d"/>
<!-- ===== color wheel panel ===== -->
<rect x="65.500" y="977" width="319" height="273" fill="#515151"/>
<rect x="134.400" y="977.500" width="232" height="23" fill="#4b4b4b"/>
<rect x="65.500" y="977" width="25.500" height="23.400" fill="#353535"/>
<use href="#ham" x="72.300" y="984.100"/>
<g fill="#424242"><rect x="133.900" y="977.500" width="1.200" height="23"/><rect x="178" y="977.500" width="1.200" height="23"/><rect x="222.300" y="977.500" width="1.200" height="23"/><rect x="266.600" y="977.500" width="1.200" height="23"/><rect x="311" y="977.500" width="1.200" height="23"/><rect x="354.900" y="977.500" width="1.200" height="23"/></g>
<clipPath id="cl5"><rect x="65.500" y="977" width="301" height="23.400"/></clipPath>
<circle cx="112.500" cy="993.200" r="10.200" fill="none" stroke="#c8c8c8" stroke-width="1.400"/><rect x="108" y="988.700" width="9" height="9" rx="2" fill="#c8c8c8"/>
<g clip-path="url(#cl5)">
<g fill="#8a8a8a" stroke="none">
<path d="M146.500 984.500q0-1.500 1.500-1.500h17q3 0 3 3v15h-21.500z" opacity=".800"/>
<rect x="148" y="984.500" width="5" height="5" fill="#6a6a6a"/><rect x="154" y="990.500" width="6" height="6" fill="#5e5e5e"/><rect x="156" y="992.500" width="2" height="2" fill="#9a9a9a"/>
<rect x="191" y="983" width="21" height="5.500" rx="2.700"/><rect x="191" y="991" width="21" height="5.500" rx="2.700"/><rect x="191" y="999" width="21" height="5.500" rx="2.700"/>
<path d="M194 988.300l2.500-3.500 2.500 3.500zM194 996.300l2.500-3.500 2.500 3.500z" fill="#4b4b4b"/>
<path d="M239 984C237 989 234.500 992.500 234.500 996.500C234.500 1001 239 1003 244.500 1003C250 1003 254.500 1001 254.500 996.500C254.500 992.500 252 989 250 984C248.500 987.500 246.500 989.500 244.500 991.500C242.500 989.500 240.500 987.500 239 984z" opacity=".850"/>
<rect x="278.500" y="985" width="21.500" height="18" rx="1.500"/><g fill="#4b4b4b"><rect x="280" y="987" width="2.500" height="2.500"/><rect x="280" y="992" width="2.500" height="2.500"/><rect x="280" y="997" width="2.500" height="2.500"/><rect x="296" y="987" width="2.500" height="2.500"/><rect x="296" y="992" width="2.500" height="2.500"/><rect x="296" y="997" width="2.500" height="2.500"/><rect x="284" y="994" width="10.500" height="1"/></g>
</g>
<path d="M324 1001v-10.500q0-2 2-2h2.500" fill="none" stroke="#8a8a8a" stroke-width="1.300"/>
<linearGradient id="gtb" x1="0" y1="1" x2="1" y2="0"><stop offset="0" stop-color="#9a9a9a"/><stop offset="1" stop-color="#505050"/></linearGradient>
<rect x="327.500" y="984.500" width="17.500" height="18" rx="2" fill="url(#gtb)" stroke="#8a8a8a" stroke-width="1.300"/>
</g>
<rect x="366.700" y="977.200" width="17.300" height="22.800" rx="2" fill="#5c5c5c" stroke="#7c7c7c" stroke-width="1"/><use href="#dn" x="375.300" y="988.300"/>
<!-- wheel -->
<circle cx="224.8" cy="1117.8" r="109.0" fill="#333"/>
<g stroke-width=".6">
<path d="M131.3 1063.8L132.7 1061.4L149.3 1071.6L148.2 1073.5z" fill="#ee1916" stroke="#ee1916"/>
<path d="M132.7 1061.4L134.2 1059.0L150.6 1069.6L149.3 1071.6z" fill="#ee1e16" stroke="#ee1e16"/>
<path d="M134.2 1059.0L135.8 1056.6L151.9 1067.7L150.6 1069.6z" fill="#ee2316" stroke="#ee2316"/>
<path d="M135.8 1056.6L137.4 1054.3L153.2 1065.8L151.9 1067.7z" fill="#ee2917" stroke="#ee2917"/>
<path d="M137.4 1054.3L139.1 1052.1L154.6 1063.9L153.2 1065.8z" fill="#ee2e17" stroke="#ee2e17"/>
<path d="M139.1 1052.1L140.9 1049.8L156.0 1062.1L154.6 1063.9z" fill="#ee3317" stroke="#ee3317"/>
<path d="M140.9 1049.8L142.7 1047.7L157.5 1060.3L156.0 1062.1z" fill="#ee3917" stroke="#ee3917"/>
<path d="M142.7 1047.7L144.5 1045.5L159.0 1058.6L157.5 1060.3z" fill="#ee3e17" stroke="#ee3e17"/>
<path d="M144.5 1045.5L146.5 1043.5L160.6 1056.9L159.0 1058.6z" fill="#ee4317" stroke="#ee4317"/>
<path d="M146.5 1043.5L148.4 1041.4L162.2 1055.2L160.6 1056.9z" fill="#ee4917" stroke="#ee4917"/>
<path d="M148.4 1041.4L150.5 1039.5L163.9 1053.6L162.2 1055.2z" fill="#ed4e18" stroke="#ed4e18"/>
<path d="M150.5 1039.5L152.5 1037.5L165.6 1052.0L163.9 1053.6z" fill="#ed5418" stroke="#ed5418"/>
<path d="M152.5 1037.5L154.7 1035.7L167.3 1050.5L165.6 1052.0z" fill="#ed5918" stroke="#ed5918"/>
<path d="M154.7 1035.7L156.8 1033.9L169.1 1049.0L167.3 1050.5z" fill="#ed5e18" stroke="#ed5e18"/>
<path d="M156.8 1033.9L159.1 1032.1L170.9 1047.6L169.1 1049.0z" fill="#ed6418" stroke="#ed6418"/>
<path d="M159.1 1032.1L161.3 1030.4L172.8 1046.2L170.9 1047.6z" fill="#ed6918" stroke="#ed6918"/>
<path d="M161.3 1030.4L163.6 1028.8L174.7 1044.9L172.8 1046.2z" fill="#ed6e18" stroke="#ed6e18"/>
<path d="M163.6 1028.8L166.0 1027.2L176.6 1043.6L174.7 1044.9z" fill="#ed7419" stroke="#ed7419"/>
<path d="M166.0 1027.2L168.4 1025.7L178.6 1042.3L176.6 1043.6z" fill="#ed7919" stroke="#ed7919"/>
<path d="M168.4 1025.7L170.8 1024.3L180.5 1041.2L178.6 1042.3z" fill="#ed7e19" stroke="#ed7e19"/>
<path d="M170.8 1024.3L173.3 1022.9L182.6 1040.0L180.5 1041.2z" fill="#ed8419" stroke="#ed8419"/>
<path d="M173.3 1022.9L175.8 1021.6L184.6 1038.9L182.6 1040.0z" fill="#ed8919" stroke="#ed8919"/>
<path d="M175.8 1021.6L178.3 1020.3L186.7 1037.9L184.6 1038.9z" fill="#ed8e19" stroke="#ed8e19"/>
<path d="M178.3 1020.3L180.9 1019.1L188.8 1037.0L186.7 1037.9z" fill="#ed941a" stroke="#ed941a"/>
<path d="M180.9 1019.1L183.5 1018.0L190.9 1036.0L188.8 1037.0z" fill="#ed991a" stroke="#ed991a"/>
<path d="M183.5 1018.0L186.1 1017.0L193.1 1035.2L190.9 1036.0z" fill="#ed9e1a" stroke="#ed9e1a"/>
<path d="M186.1 1017.0L188.7 1016.0L195.3 1034.4L193.1 1035.2z" fill="#eda41a" stroke="#eda41a"/>
<path d="M188.7 1016.0L191.4 1015.1L197.5 1033.6L195.3 1034.4z" fill="#eda91a" stroke="#eda91a"/>
<path d="M191.4 1015.1L194.1 1014.2L199.7 1032.9L197.5 1033.6z" fill="#edae1a" stroke="#edae1a"/>
<path d="M194.1 1014.2L196.8 1013.5L201.9 1032.3L199.7 1032.9z" fill="#edb41a" stroke="#edb41a"/>
<path d="M196.8 1013.5L199.6 1012.8L204.1 1031.7L201.9 1032.3z" fill="#ecb91b" stroke="#ecb91b"/>
<path d="M199.6 1012.8L202.3 1012.2L206.4 1031.2L204.1 1031.7z" fill="#ecbf1b" stroke="#ecbf1b"/>
<path d="M202.3 1012.2L205.1 1011.6L208.7 1030.8L206.4 1031.2z" fill="#ecc41b" stroke="#ecc41b"/>
<path d="M205.1 1011.6L207.9 1011.1L211.0 1030.4L208.7 1030.8z" fill="#ecc91b" stroke="#ecc91b"/>
<path d="M207.9 1011.1L210.7 1010.7L213.2 1030.1L211.0 1030.4z" fill="#eccf1b" stroke="#eccf1b"/>
<path d="M210.7 1010.7L213.5 1010.4L215.5 1029.8L213.2 1030.1z" fill="#ecd41b" stroke="#ecd41b"/>
<path d="M213.5 1010.4L216.3 1010.1L217.9 1029.6L215.5 1029.8z" fill="#ecd91b" stroke="#ecd91b"/>
<path d="M216.3 1010.1L219.1 1009.9L220.2 1029.4L217.9 1029.6z" fill="#ecdf1c" stroke="#ecdf1c"/>
<path d="M219.1 1009.9L222.0 1009.8L222.5 1029.3L220.2 1029.4z" fill="#ece41c" stroke="#ece41c"/>
<path d="M222.0 1009.8L224.8 1009.8L224.8 1029.3L222.5 1029.3z" fill="#ece91c" stroke="#ece91c"/>
<path d="M224.8 1009.8L227.6 1009.8L227.1 1029.3L224.8 1029.3z" fill="#e9ec1c" stroke="#e9ec1c"/>
<path d="M227.6 1009.8L230.5 1009.9L229.4 1029.4L227.1 1029.3z" fill="#e4eb1c" stroke="#e4eb1c"/>
<path d="M230.5 1009.9L233.3 1010.1L231.7 1029.6L229.4 1029.4z" fill="#dfeb1c" stroke="#dfeb1c"/>
<path d="M233.3 1010.1L236.1 1010.4L234.1 1029.8L231.7 1029.6z" fill="#daeb1c" stroke="#daeb1c"/>
<path d="M236.1 1010.4L238.9 1010.7L236.4 1030.1L234.1 1029.8z" fill="#d5ea1c" stroke="#d5ea1c"/>
<path d="M238.9 1010.7L241.7 1011.1L238.6 1030.4L236.4 1030.1z" fill="#d0ea1c" stroke="#d0ea1c"/>
<path d="M241.7 1011.1L244.5 1011.6L240.9 1030.8L238.6 1030.4z" fill="#cbea1c" stroke="#cbea1c"/>
<path d="M244.5 1011.6L247.3 1012.2L243.2 1031.2L240.9 1030.8z" fill="#c5e91c" stroke="#c5e91c"/>
<path d="M247.3 1012.2L250.0 1012.8L245.5 1031.7L243.2 1031.2z" fill="#c0e91c" stroke="#c0e91c"/>
<path d="M250.0 1012.8L252.8 1013.5L247.7 1032.3L245.5 1031.7z" fill="#bbe91c" stroke="#bbe91c"/>
<path d="M252.8 1013.5L255.5 1014.2L249.9 1032.9L247.7 1032.3z" fill="#b6e81d" stroke="#b6e81d"/>
<path d="M255.5 1014.2L258.2 1015.1L252.1 1033.6L249.9 1032.9z" fill="#b1e81d" stroke="#b1e81d"/>
<path d="M258.2 1015.1L260.9 1016.0L254.3 1034.4L252.1 1033.6z" fill="#ace81d" stroke="#ace81d"/>
<path d="M260.9 1016.0L263.5 1017.0L256.5 1035.2L254.3 1034.4z" fill="#a6e71d" stroke="#a6e71d"/>
<path d="M263.5 1017.0L266.1 1018.0L258.7 1036.0L256.5 1035.2z" fill="#a1e71d" stroke="#a1e71d"/>
<path d="M266.1 1018.0L268.7 1019.1L260.8 1037.0L258.7 1036.0z" fill="#9ce71d" stroke="#9ce71d"/>
<path d="M268.7 1019.1L271.3 1020.3L262.9 1037.9L260.8 1037.0z" fill="#97e61d" stroke="#97e61d"/>
<path d="M271.3 1020.3L273.8 1021.6L265.0 1038.9L262.9 1037.9z" fill="#92e61d" stroke="#92e61d"/>
<path d="M273.8 1021.6L276.3 1022.9L267.0 1040.0L265.0 1038.9z" fill="#8de61d" stroke="#8de61d"/>
<path d="M276.3 1022.9L278.8 1024.3L269.1 1041.2L267.0 1040.0z" fill="#88e51d" stroke="#88e51d"/>
<path d="M278.8 1024.3L281.2 1025.7L271.0 1042.3L269.1 1041.2z" fill="#82e51d" stroke="#82e51d"/>
<path d="M281.2 1025.7L283.6 1027.2L273.0 1043.6L271.0 1042.3z" fill="#7de41d" stroke="#7de41d"/>
<path d="M283.6 1027.2L286.0 1028.8L274.9 1044.9L273.0 1043.6z" fill="#78e41d" stroke="#78e41d"/>
<path d="M286.0 1028.8L288.3 1030.4L276.8 1046.2L274.9 1044.9z" fill="#73e41d" stroke="#73e41d"/>
<path d="M288.3 1030.4L290.5 1032.1L278.7 1047.6L276.8 1046.2z" fill="#6ee31d" stroke="#6ee31d"/>
<path d="M290.5 1032.1L292.8 1033.9L280.5 1049.0L278.7 1047.6z" fill="#69e31d" stroke="#69e31d"/>
<path d="M292.8 1033.9L294.9 1035.7L282.3 1050.5L280.5 1049.0z" fill="#64e31d" stroke="#64e31d"/>
<path d="M294.9 1035.7L297.1 1037.5L284.0 1052.0L282.3 1050.5z" fill="#5ee21d" stroke="#5ee21d"/>
<path d="M297.1 1037.5L299.1 1039.5L285.7 1053.6L284.0 1052.0z" fill="#59e21d" stroke="#59e21d"/>
<path d="M299.1 1039.5L301.2 1041.4L287.4 1055.2L285.7 1053.6z" fill="#54e21d" stroke="#54e21d"/>
<path d="M301.2 1041.4L303.1 1043.5L289.0 1056.9L287.4 1055.2z" fill="#4fe11e" stroke="#4fe11e"/>
<path d="M303.1 1043.5L305.1 1045.5L290.6 1058.6L289.0 1056.9z" fill="#4ae11e" stroke="#4ae11e"/>
<path d="M305.1 1045.5L306.9 1047.7L292.1 1060.3L290.6 1058.6z" fill="#45e11e" stroke="#45e11e"/>
<path d="M306.9 1047.7L308.7 1049.8L293.6 1062.1L292.1 1060.3z" fill="#3fe01e" stroke="#3fe01e"/>
<path d="M308.7 1049.8L310.5 1052.1L295.0 1063.9L293.6 1062.1z" fill="#3ae01e" stroke="#3ae01e"/>
<path d="M310.5 1052.1L312.2 1054.3L296.4 1065.8L295.0 1063.9z" fill="#35e01e" stroke="#35e01e"/>
<path d="M312.2 1054.3L313.8 1056.6L297.7 1067.7L296.4 1065.8z" fill="#30df1e" stroke="#30df1e"/>
<path d="M313.8 1056.6L315.4 1059.0L299.0 1069.6L297.7 1067.7z" fill="#2bdf1e" stroke="#2bdf1e"/>
<path d="M315.4 1059.0L316.9 1061.4L300.3 1071.6L299.0 1069.6z" fill="#26df1e" stroke="#26df1e"/>
<path d="M316.9 1061.4L318.3 1063.8L301.4 1073.5L300.3 1071.6z" fill="#21de1e" stroke="#21de1e"/>
<path d="M318.3 1063.8L319.7 1066.3L302.6 1075.6L301.4 1073.5z" fill="#1ede21" stroke="#1ede21"/>
<path d="M319.7 1066.3L321.0 1068.8L303.7 1077.6L302.6 1075.6z" fill="#1edf26" stroke="#1edf26"/>
<path d="M321.0 1068.8L322.3 1071.3L304.7 1079.7L303.7 1077.6z" fill="#1edf2b" stroke="#1edf2b"/>
<path d="M322.3 1071.3L323.5 1073.9L305.6 1081.8L304.7 1079.7z" fill="#1ddf30" stroke="#1ddf30"/>
<path d="M323.5 1073.9L324.6 1076.5L306.6 1083.9L305.6 1081.8z" fill="#1de035" stroke="#1de035"/>
<path d="M324.6 1076.5L325.6 1079.1L307.4 1086.1L306.6 1083.9z" fill="#1de03a" stroke="#1de03a"/>
<path d="M325.6 1079.1L326.6 1081.7L308.2 1088.3L307.4 1086.1z" fill="#1de03f" stroke="#1de03f"/>
<path d="M326.6 1081.7L327.5 1084.4L309.0 1090.5L308.2 1088.3z" fill="#1ce145" stroke="#1ce145"/>
<path d="M327.5 1084.4L328.4 1087.1L309.7 1092.7L309.0 1090.5z" fill="#1ce14a" stroke="#1ce14a"/>
<path d="M328.4 1087.1L329.1 1089.8L310.3 1094.9L309.7 1092.7z" fill="#1ce14f" stroke="#1ce14f"/>
<path d="M329.1 1089.8L329.8 1092.6L310.9 1097.1L310.3 1094.9z" fill="#1ce254" stroke="#1ce254"/>
<path d="M329.8 1092.6L330.4 1095.3L311.4 1099.4L310.9 1097.1z" fill="#1ce259" stroke="#1ce259"/>
<path d="M330.4 1095.3L331.0 1098.1L311.8 1101.7L311.4 1099.4z" fill="#1ce25e" stroke="#1ce25e"/>
<path d="M331.0 1098.1L331.5 1100.9L312.2 1104.0L311.8 1101.7z" fill="#1be364" stroke="#1be364"/>
<path d="M331.5 1100.9L331.9 1103.7L312.5 1106.2L312.2 1104.0z" fill="#1be369" stroke="#1be369"/>
<path d="M331.9 1103.7L332.2 1106.5L312.8 1108.5L312.5 1106.2z" fill="#1be36e" stroke="#1be36e"/>
<path d="M332.2 1106.5L332.5 1109.3L313.0 1110.9L312.8 1108.5z" fill="#1be473" stroke="#1be473"/>
<path d="M332.5 1109.3L332.7 1112.1L313.2 1113.2L313.0 1110.9z" fill="#1ae478" stroke="#1ae478"/>
<path d="M332.7 1112.1L332.8 1115.0L313.3 1115.5L313.2 1113.2z" fill="#1ae47d" stroke="#1ae47d"/>
<path d="M332.8 1115.0L332.8 1117.8L313.3 1117.8L313.3 1115.5z" fill="#1ae582" stroke="#1ae582"/>
<path d="M332.8 1117.8L332.8 1120.6L313.3 1120.1L313.3 1117.8z" fill="#1ae588" stroke="#1ae588"/>
<path d="M332.8 1120.6L332.7 1123.5L313.2 1122.4L313.3 1120.1z" fill="#1ae68d" stroke="#1ae68d"/>
<path d="M332.7 1123.5L332.5 1126.3L313.0 1124.7L313.2 1122.4z" fill="#1ae692" stroke="#1ae692"/>
<path d="M332.5 1126.3L332.2 1129.1L312.8 1127.1L313.0 1124.7z" fill="#19e697" stroke="#19e697"/>
<path d="M332.2 1129.1L331.9 1131.9L312.5 1129.4L312.8 1127.1z" fill="#19e79c" stroke="#19e79c"/>
<path d="M331.9 1131.9L331.5 1134.7L312.2 1131.6L312.5 1129.4z" fill="#19e7a1" stroke="#19e7a1"/>
<path d="M331.5 1134.7L331.0 1137.5L311.8 1133.9L312.2 1131.6z" fill="#19e7a6" stroke="#19e7a6"/>
<path d="M331.0 1137.5L330.4 1140.3L311.4 1136.2L311.8 1133.9z" fill="#18e8ac" stroke="#18e8ac"/>
<path d="M330.4 1140.3L329.8 1143.0L310.9 1138.5L311.4 1136.2z" fill="#18e8b1" stroke="#18e8b1"/>
<path d="M329.8 1143.0L329.1 1145.8L310.3 1140.7L310.9 1138.5z" fill="#18e8b6" stroke="#18e8b6"/>
<path d="M329.1 1145.8L328.4 1148.5L309.7 1142.9L310.3 1140.7z" fill="#18e9bb" stroke="#18e9bb"/>
<path d="M328.4 1148.5L327.5 1151.2L309.0 1145.1L309.7 1142.9z" fill="#18e9c0" stroke="#18e9c0"/>
<path d="M327.5 1151.2L326.6 1153.9L308.2 1147.3L309.0 1145.1z" fill="#18e9c5" stroke="#18e9c5"/>
<path d="M326.6 1153.9L325.6 1156.5L307.4 1149.5L308.2 1147.3z" fill="#17eacb" stroke="#17eacb"/>
<path d="M325.6 1156.5L324.6 1159.1L306.6 1151.7L307.4 1149.5z" fill="#17ead0" stroke="#17ead0"/>
<path d="M324.6 1159.1L323.5 1161.7L305.6 1153.8L306.6 1151.7z" fill="#17ead5" stroke="#17ead5"/>
<path d="M323.5 1161.7L322.3 1164.3L304.7 1155.9L305.6 1153.8z" fill="#17ebda" stroke="#17ebda"/>
<path d="M322.3 1164.3L321.0 1166.8L303.7 1158.0L304.7 1155.9z" fill="#16ebdf" stroke="#16ebdf"/>
<path d="M321.0 1166.8L319.7 1169.3L302.6 1160.0L303.7 1158.0z" fill="#16ebe4" stroke="#16ebe4"/>
<path d="M319.7 1169.3L318.3 1171.8L301.4 1162.0L302.6 1160.0z" fill="#16ece9" stroke="#16ece9"/>
<path d="M318.3 1171.8L316.9 1174.2L300.3 1164.0L301.4 1162.0z" fill="#16e9ec" stroke="#16e9ec"/>
<path d="M316.9 1174.2L315.4 1176.6L299.0 1166.0L300.3 1164.0z" fill="#16e4ec" stroke="#16e4ec"/>
<path d="M315.4 1176.6L313.8 1179.0L297.7 1167.9L299.0 1166.0z" fill="#16dfec" stroke="#16dfec"/>
<path d="M313.8 1179.0L312.2 1181.3L296.4 1169.8L297.7 1167.9z" fill="#16d9ec" stroke="#16d9ec"/>
<path d="M312.2 1181.3L310.5 1183.5L295.0 1171.7L296.4 1169.8z" fill="#16d4ec" stroke="#16d4ec"/>
<path d="M310.5 1183.5L308.7 1185.8L293.6 1173.5L295.0 1171.7z" fill="#15cfed" stroke="#15cfed"/>
<path d="M308.7 1185.8L306.9 1187.9L292.1 1175.3L293.6 1173.5z" fill="#15caed" stroke="#15caed"/>
<path d="M306.9 1187.9L305.1 1190.1L290.6 1177.0L292.1 1175.3z" fill="#15c4ed" stroke="#15c4ed"/>
<path d="M305.1 1190.1L303.1 1192.1L289.0 1178.7L290.6 1177.0z" fill="#15bfed" stroke="#15bfed"/>
<path d="M303.1 1192.1L301.2 1194.2L287.4 1180.4L289.0 1178.7z" fill="#15baed" stroke="#15baed"/>
<path d="M301.2 1194.2L299.1 1196.1L285.7 1182.0L287.4 1180.4z" fill="#15b4ed" stroke="#15b4ed"/>
<path d="M299.1 1196.1L297.1 1198.1L284.0 1183.6L285.7 1182.0z" fill="#15afed" stroke="#15afed"/>
<path d="M297.1 1198.1L294.9 1199.9L282.3 1185.1L284.0 1183.6z" fill="#15aaed" stroke="#15aaed"/>
<path d="M294.9 1199.9L292.8 1201.7L280.5 1186.6L282.3 1185.1z" fill="#15a4ed" stroke="#15a4ed"/>
<path d="M292.8 1201.7L290.5 1203.5L278.7 1188.0L280.5 1186.6z" fill="#159fed" stroke="#159fed"/>
<path d="M290.5 1203.5L288.3 1205.2L276.8 1189.4L278.7 1188.0z" fill="#149aee" stroke="#149aee"/>
<path d="M288.3 1205.2L286.0 1206.8L274.9 1190.7L276.8 1189.4z" fill="#1495ee" stroke="#1495ee"/>
<path d="M286.0 1206.8L283.6 1208.4L273.0 1192.0L274.9 1190.7z" fill="#148fee" stroke="#148fee"/>
<path d="M283.6 1208.4L281.2 1209.9L271.0 1193.3L273.0 1192.0z" fill="#148aee" stroke="#148aee"/>
<path d="M281.2 1209.9L278.8 1211.3L269.1 1194.4L271.0 1193.3z" fill="#1485ee" stroke="#1485ee"/>
<path d="M278.8 1211.3L276.3 1212.7L267.0 1195.6L269.1 1194.4z" fill="#147fee" stroke="#147fee"/>
<path d="M276.3 1212.7L273.8 1214.0L265.0 1196.7L267.0 1195.6z" fill="#147aee" stroke="#147aee"/>
<path d="M273.8 1214.0L271.3 1215.3L262.9 1197.7L265.0 1196.7z" fill="#1475ee" stroke="#1475ee"/>
<path d="M271.3 1215.3L268.7 1216.5L260.8 1198.6L262.9 1197.7z" fill="#146fee" stroke="#146fee"/>
<path d="M268.7 1216.5L266.1 1217.6L258.7 1199.6L260.8 1198.6z" fill="#146aee" stroke="#146aee"/>
<path d="M266.1 1217.6L263.5 1218.6L256.5 1200.4L258.7 1199.6z" fill="#1365ef" stroke="#1365ef"/>
<path d="M263.5 1218.6L260.9 1219.6L254.3 1201.2L256.5 1200.4z" fill="#1360ef" stroke="#1360ef"/>
<path d="M260.9 1219.6L258.2 1220.5L252.1 1202.0L254.3 1201.2z" fill="#135aef" stroke="#135aef"/>
<path d="M258.2 1220.5L255.5 1221.4L249.9 1202.7L252.1 1202.0z" fill="#1355ef" stroke="#1355ef"/>
<path d="M255.5 1221.4L252.8 1222.1L247.7 1203.3L249.9 1202.7z" fill="#1350ef" stroke="#1350ef"/>
<path d="M252.8 1222.1L250.0 1222.8L245.5 1203.9L247.7 1203.3z" fill="#134aef" stroke="#134aef"/>
<path d="M250.0 1222.8L247.3 1223.4L243.2 1204.4L245.5 1203.9z" fill="#1345ef" stroke="#1345ef"/>
<path d="M247.3 1223.4L244.5 1224.0L240.9 1204.8L243.2 1204.4z" fill="#1340ef" stroke="#1340ef"/>
<path d="M244.5 1224.0L241.7 1224.5L238.6 1205.2L240.9 1204.8z" fill="#133aef" stroke="#133aef"/>
<path d="M241.7 1224.5L238.9 1224.9L236.4 1205.5L238.6 1205.2z" fill="#1335ef" stroke="#1335ef"/>
<path d="M238.9 1224.9L236.1 1225.2L234.1 1205.8L236.4 1205.5z" fill="#1230f0" stroke="#1230f0"/>
<path d="M236.1 1225.2L233.3 1225.5L231.7 1206.0L234.1 1205.8z" fill="#122bf0" stroke="#122bf0"/>
<path d="M233.3 1225.5L230.5 1225.7L229.4 1206.2L231.7 1206.0z" fill="#1225f0" stroke="#1225f0"/>
<path d="M230.5 1225.7L227.6 1225.8L227.1 1206.3L229.4 1206.2z" fill="#1220f0" stroke="#1220f0"/>
<path d="M227.6 1225.8L224.8 1225.8L224.8 1206.3L227.1 1206.3z" fill="#121bf0" stroke="#121bf0"/>
<path d="M224.8 1225.8L222.0 1225.8L222.5 1206.3L224.8 1206.3z" fill="#1518f0" stroke="#1518f0"/>
<path d="M222.0 1225.8L219.1 1225.7L220.2 1206.2L222.5 1206.3z" fill="#1a18f0" stroke="#1a18f0"/>
<path d="M219.1 1225.7L216.3 1225.5L217.9 1206.0L220.2 1206.2z" fill="#2018f0" stroke="#2018f0"/>
<path d="M216.3 1225.5L213.5 1225.2L215.5 1205.8L217.9 1206.0z" fill="#2518f0" stroke="#2518f0"/>
<path d="M213.5 1225.2L210.7 1224.9L213.2 1205.5L215.5 1205.8z" fill="#2b18f0" stroke="#2b18f0"/>
<path d="M210.7 1224.9L207.9 1224.5L211.0 1205.2L213.2 1205.5z" fill="#3118f0" stroke="#3118f0"/>
<path d="M207.9 1224.5L205.1 1224.0L208.7 1204.8L211.0 1205.2z" fill="#3618f0" stroke="#3618f0"/>
<path d="M205.1 1224.0L202.3 1223.4L206.4 1204.4L208.7 1204.8z" fill="#3c18f0" stroke="#3c18f0"/>
<path d="M202.3 1223.4L199.6 1222.8L204.1 1203.9L206.4 1204.4z" fill="#4118f0" stroke="#4118f0"/>
<path d="M199.6 1222.8L196.8 1222.1L201.9 1203.3L204.1 1203.9z" fill="#4718f0" stroke="#4718f0"/>
<path d="M196.8 1222.1L194.1 1221.4L199.7 1202.7L201.9 1203.3z" fill="#4c18ef" stroke="#4c18ef"/>
<path d="M194.1 1221.4L191.4 1220.5L197.5 1202.0L199.7 1202.7z" fill="#5218ef" stroke="#5218ef"/>
<path d="M191.4 1220.5L188.7 1219.6L195.3 1201.2L197.5 1202.0z" fill="#5718ef" stroke="#5718ef"/>
<path d="M188.7 1219.6L186.1 1218.6L193.1 1200.4L195.3 1201.2z" fill="#5d18ef" stroke="#5d18ef"/>
<path d="M186.1 1218.6L183.5 1217.6L190.9 1199.6L193.1 1200.4z" fill="#6218ef" stroke="#6218ef"/>
<path d="M183.5 1217.6L180.9 1216.5L188.8 1198.6L190.9 1199.6z" fill="#6818ef" stroke="#6818ef"/>
<path d="M180.9 1216.5L178.3 1215.3L186.7 1197.7L188.8 1198.6z" fill="#6e18ef" stroke="#6e18ef"/>
<path d="M178.3 1215.3L175.8 1214.0L184.6 1196.7L186.7 1197.7z" fill="#7318ef" stroke="#7318ef"/>
<path d="M175.8 1214.0L173.3 1212.7L182.6 1195.6L184.6 1196.7z" fill="#7918ef" stroke="#7918ef"/>
<path d="M173.3 1212.7L170.8 1211.3L180.6 1194.4L182.6 1195.6z" fill="#7e18ef" stroke="#7e18ef"/>
<path d="M170.8 1211.3L168.4 1209.9L178.6 1193.3L180.6 1194.4z" fill="#8418ef" stroke="#8418ef"/>
<path d="M168.4 1209.9L166.0 1208.4L176.6 1192.0L178.6 1193.3z" fill="#8918ef" stroke="#8918ef"/>
<path d="M166.0 1208.4L163.6 1206.8L174.7 1190.7L176.6 1192.0z" fill="#8f18ef" stroke="#8f18ef"/>
<path d="M163.6 1206.8L161.3 1205.2L172.8 1189.4L174.7 1190.7z" fill="#9418ef" stroke="#9418ef"/>
<path d="M161.3 1205.2L159.1 1203.5L170.9 1188.0L172.8 1189.4z" fill="#9a18ef" stroke="#9a18ef"/>
<path d="M159.1 1203.5L156.8 1201.7L169.1 1186.6L170.9 1188.0z" fill="#a018ef" stroke="#a018ef"/>
<path d="M156.8 1201.7L154.7 1199.9L167.3 1185.1L169.1 1186.6z" fill="#a518ef" stroke="#a518ef"/>
<path d="M154.7 1199.9L152.5 1198.1L165.6 1183.6L167.3 1185.1z" fill="#ab18ef" stroke="#ab18ef"/>
<path d="M152.5 1198.1L150.5 1196.1L163.9 1182.0L165.6 1183.6z" fill="#b018ef" stroke="#b018ef"/>
<path d="M150.5 1196.1L148.4 1194.2L162.2 1180.4L163.9 1182.0z" fill="#b618ef" stroke="#b618ef"/>
<path d="M148.4 1194.2L146.5 1192.1L160.6 1178.7L162.2 1180.4z" fill="#bb18ee" stroke="#bb18ee"/>
<path d="M146.5 1192.1L144.5 1190.1L159.0 1177.0L160.6 1178.7z" fill="#c118ee" stroke="#c118ee"/>
<path d="M144.5 1190.1L142.7 1187.9L157.5 1175.3L159.0 1177.0z" fill="#c618ee" stroke="#c618ee"/>
<path d="M142.7 1187.9L140.9 1185.8L156.0 1173.5L157.5 1175.3z" fill="#cc18ee" stroke="#cc18ee"/>
<path d="M140.9 1185.8L139.1 1183.5L154.6 1171.7L156.0 1173.5z" fill="#d118ee" stroke="#d118ee"/>
<path d="M139.1 1183.5L137.4 1181.3L153.2 1169.8L154.6 1171.7z" fill="#d718ee" stroke="#d718ee"/>
<path d="M137.4 1181.3L135.8 1179.0L151.9 1167.9L153.2 1169.8z" fill="#dd18ee" stroke="#dd18ee"/>
<path d="M135.8 1179.0L134.2 1176.6L150.6 1166.0L151.9 1167.9z" fill="#e218ee" stroke="#e218ee"/>
<path d="M134.2 1176.6L132.7 1174.2L149.3 1164.0L150.6 1166.0z" fill="#e818ee" stroke="#e818ee"/>
<path d="M132.7 1174.2L131.3 1171.8L148.2 1162.0L149.3 1164.0z" fill="#ed18ee" stroke="#ed18ee"/>
<path d="M131.3 1171.8L129.9 1169.3L147.0 1160.0L148.2 1162.0z" fill="#f018eb" stroke="#f018eb"/>
<path d="M129.9 1169.3L128.6 1166.8L145.9 1158.0L147.0 1160.0z" fill="#f018e6" stroke="#f018e6"/>
<path d="M128.6 1166.8L127.3 1164.3L144.9 1155.9L145.9 1158.0z" fill="#f018e0" stroke="#f018e0"/>
<path d="M127.3 1164.3L126.1 1161.7L144.0 1153.8L144.9 1155.9z" fill="#f018db" stroke="#f018db"/>
<path d="M126.1 1161.7L125.0 1159.1L143.0 1151.7L144.0 1153.8z" fill="#f018d6" stroke="#f018d6"/>
<path d="M125.0 1159.1L124.0 1156.5L142.2 1149.5L143.0 1151.7z" fill="#f018d0" stroke="#f018d0"/>
<path d="M124.0 1156.5L123.0 1153.9L141.4 1147.3L142.2 1149.5z" fill="#f018cb" stroke="#f018cb"/>
<path d="M123.0 1153.9L122.1 1151.2L140.6 1145.1L141.4 1147.3z" fill="#f018c6" stroke="#f018c6"/>
<path d="M122.1 1151.2L121.2 1148.5L139.9 1142.9L140.6 1145.1z" fill="#f018c0" stroke="#f018c0"/>
<path d="M121.2 1148.5L120.5 1145.8L139.3 1140.7L139.9 1142.9z" fill="#f018bb" stroke="#f018bb"/>
<path d="M120.5 1145.8L119.8 1143.0L138.7 1138.5L139.3 1140.7z" fill="#ef17b5" stroke="#ef17b5"/>
<path d="M119.8 1143.0L119.2 1140.3L138.2 1136.2L138.7 1138.5z" fill="#ef17b0" stroke="#ef17b0"/>
<path d="M119.2 1140.3L118.6 1137.5L137.8 1133.9L138.2 1136.2z" fill="#ef17aa" stroke="#ef17aa"/>
<path d="M118.6 1137.5L118.1 1134.7L137.4 1131.6L137.8 1133.9z" fill="#ef17a5" stroke="#ef17a5"/>
<path d="M118.1 1134.7L117.7 1131.9L137.1 1129.4L137.4 1131.6z" fill="#ef17a0" stroke="#ef17a0"/>
<path d="M117.7 1131.9L117.4 1129.1L136.8 1127.1L137.1 1129.4z" fill="#ef179a" stroke="#ef179a"/>
<path d="M117.4 1129.1L117.1 1126.3L136.6 1124.7L136.8 1127.1z" fill="#ef1795" stroke="#ef1795"/>
<path d="M117.1 1126.3L116.9 1123.5L136.4 1122.4L136.6 1124.7z" fill="#ef1790" stroke="#ef1790"/>
<path d="M116.9 1123.5L116.8 1120.6L136.3 1120.1L136.4 1122.4z" fill="#ef178a" stroke="#ef178a"/>
<path d="M116.8 1120.6L116.8 1117.8L136.3 1117.8L136.3 1120.1z" fill="#ef1785" stroke="#ef1785"/>
<path d="M116.8 1117.8L116.8 1115.0L136.3 1115.5L136.3 1117.8z" fill="#ef177f" stroke="#ef177f"/>
<path d="M116.8 1115.0L116.9 1112.1L136.4 1113.2L136.3 1115.5z" fill="#ef177a" stroke="#ef177a"/>
<path d="M116.9 1112.1L117.1 1109.3L136.6 1110.9L136.4 1113.2z" fill="#ef1774" stroke="#ef1774"/>
<path d="M117.1 1109.3L117.4 1106.5L136.8 1108.5L136.6 1110.9z" fill="#ef176f" stroke="#ef176f"/>
<path d="M117.4 1106.5L117.7 1103.7L137.1 1106.2L136.8 1108.5z" fill="#ef176a" stroke="#ef176a"/>
<path d="M117.7 1103.7L118.1 1100.9L137.4 1104.0L137.1 1106.2z" fill="#ef1764" stroke="#ef1764"/>
<path d="M118.1 1100.9L118.6 1098.1L137.8 1101.7L137.4 1104.0z" fill="#ef175f" stroke="#ef175f"/>
<path d="M118.6 1098.1L119.2 1095.3L138.2 1099.4L137.8 1101.7z" fill="#ef175a" stroke="#ef175a"/>
<path d="M119.2 1095.3L119.8 1092.6L138.7 1097.1L138.2 1099.4z" fill="#ef1754" stroke="#ef1754"/>
<path d="M119.8 1092.6L120.5 1089.8L139.3 1094.9L138.7 1097.1z" fill="#ef174f" stroke="#ef174f"/>
<path d="M120.5 1089.8L121.2 1087.1L139.9 1092.7L139.3 1094.9z" fill="#ee1649" stroke="#ee1649"/>
<path d="M121.2 1087.1L122.1 1084.4L140.6 1090.5L139.9 1092.7z" fill="#ee1644" stroke="#ee1644"/>
<path d="M122.1 1084.4L123.0 1081.7L141.4 1088.3L140.6 1090.5z" fill="#ee163e" stroke="#ee163e"/>
<path d="M123.0 1081.7L124.0 1079.1L142.2 1086.1L141.4 1088.3z" fill="#ee1639" stroke="#ee1639"/>
<path d="M124.0 1079.1L125.0 1076.5L143.0 1083.9L142.2 1086.1z" fill="#ee1634" stroke="#ee1634"/>
<path d="M125.0 1076.5L126.1 1073.9L144.0 1081.8L143.0 1083.9z" fill="#ee162e" stroke="#ee162e"/>
<path d="M126.1 1073.9L127.3 1071.3L144.9 1079.7L144.0 1081.8z" fill="#ee1629" stroke="#ee1629"/>
<path d="M127.3 1071.3L128.6 1068.8L145.9 1077.6L144.9 1079.7z" fill="#ee1624" stroke="#ee1624"/>
<path d="M128.6 1068.8L129.9 1066.3L147.0 1075.6L145.9 1077.6z" fill="#ee161e" stroke="#ee161e"/>
<path d="M129.9 1066.3L131.3 1063.8L148.2 1073.5L147.0 1075.6z" fill="#ee1619" stroke="#ee1619"/>
</g>
<circle cx="224.800" cy="1117.800" r="90.800" fill="#333"/>
<circle cx="224.800" cy="1117.800" r="89.800" fill="#515151"/>
<!-- SV square -->
<linearGradient id="gsv1" x1="0" y1="0" x2="1" y2="0"><stop offset="0" stop-color="#fff"/><stop offset="1" stop-color="#f00"/></linearGradient>
<linearGradient id="gsv2" x1="0" y1="0" x2="0" y2="1"><stop offset="0" stop-color="#000" stop-opacity="0"/><stop offset="1" stop-color="#000"/></linearGradient>
<rect x="167.400" y="1061.200" width="114.400" height="114.200" fill="#2c2c2c"/>
<rect x="168.200" y="1062" width="112.900" height="112.600" fill="url(#gsv1)"/>
<rect x="168.200" y="1062" width="112.900" height="112.600" fill="url(#gsv2)"/>
<circle cx="168" cy="1140.300" r="6" fill="#4f4f4f" stroke="#222" stroke-width="3.600"/>
<circle cx="168" cy="1140.300" r="6" fill="none" stroke="#fff" stroke-width="2"/>
<!-- hue marker -->
<g transform="translate(138.800,1068.300) rotate(30)">
<rect x="-10" y="-8" width="20" height="16" fill="#111"/>
<rect x="-8.600" y="-6.600" width="17.200" height="13.200" fill="#fff"/>
<rect x="-6.300" y="-4.300" width="12.600" height="8.600" fill="#e8121a"/>
</g>
<!-- chips -->
<rect x="86" y="1187.200" width="34.500" height="35.600" rx="5" fill="none" stroke="#7a7a7a" stroke-width="1.500"/>
<rect x="89.300" y="1191.200" width="28.300" height="27.600" fill="#fff"/>
<rect x="67.600" y="1171.900" width="33.600" height="33.800" rx="4" fill="#4f4f4f" stroke="#7b8fc6" stroke-width="3.200"/>
<rect x="66.800" y="1226.800" width="53.700" height="18.200" rx="5" fill="none" stroke="#7a7a7a" stroke-width="1.500"/>
<pattern id="chk3" x="70.800" y="1230.800" width="13.200" height="10.200" patternUnits="userSpaceOnUse"><rect width="13.200" height="10.200" fill="#fff"/><rect x="6.600" width="6.600" height="5.100" fill="#8c8c8c"/><rect y="5.100" width="6.600" height="5.100" fill="#8c8c8c"/></pattern>
<rect x="70.800" y="1230.800" width="46.200" height="10.200" rx="2.500" fill="url(#chk3)"/>
<!-- HSV -->
<g fill="#b4b4b4"><rect x="199.200" y="1232" width="12" height="11.300" rx="1.500"/><rect x="248.400" y="1232" width="11.600" height="11.300" rx="1.500"/><rect x="297" y="1232" width="12" height="11.300" rx="1.500"/></g>
<g font-size="11" font-weight="bold" text-anchor="middle" style="fill:#3a3a3a" transform="rotate(0.03 250 1240)"><text x="205.200" y="1241.700" style="fill:#3a3a3a">H</text><text x="254.200" y="1241.700" style="fill:#3a3a3a">S</text><text x="303" y="1241.700" style="fill:#3a3a3a">V</text></g>
<g font-size="16.500"><text x="231" y="1243.500" textLength="8" lengthAdjust="spacingAndGlyphs">0</text><text x="279.500" y="1243.500" textLength="8" lengthAdjust="spacingAndGlyphs">0</text><text x="321" y="1243.500" textLength="15.500" lengthAdjust="spacingAndGlyphs">31</text></g>
<circle cx="366.700" cy="1231.300" r="10.800" fill="none" stroke="#c0c0c0" stroke-width="1.300"/><path d="M362.500 1224.500l11 6.800-11 6.800z" fill="none" stroke="#c0c0c0" stroke-width="1.300" stroke-linejoin="round"/>
<!-- ===== command bar ===== -->
<rect x="386" y="21.800" width="1384.500" height="37.900" fill="#4f4f4f"/>
<g fill="#626262"><rect x="429" y="21.800" width="1" height="37.900"/><rect x="573.500" y="21.800" width="1" height="37.900"/><rect x="657.700" y="21.800" width="1" height="37.900"/><rect x="817" y="21.800" width="1" height="37.900"/><rect x="939" y="21.800" width="1" height="37.900"/><rect x="1062" y="21.800" width="1" height="37.900"/><rect x="1111.300" y="21.800" width="1" height="37.900"/></g>
<rect x="945.400" y="21.800" width="73.400" height="37.900" fill="#67748f"/>
<!-- CSP logo -->
<rect x="391.500" y="27.500" width="26" height="26.500" rx="3" class="i" style="stroke-width:1.500"/>
<g transform="translate(404.800,40) rotate(-14)"><path class="i" d="M7.500-7.500C2-11-8-9-10.200-1.500C-12 6-5 10.500 2.500 9C9.500 7.500 12.500 1.500 10.500-2.500C8.500-6 3-5.500-1.500-2.500C-5.500 .500-6 4-3.500 5C-1 6 3 3.500 5 .500" style="stroke-width:2.100"/></g>
<!-- new -->
<path class="i" d="M456 51.500h-3.500q-2.500 0-3-2.500l-.5-2.500h-4.500v-17q0-2 2-2h15q2 0 2 2v14" style="stroke-width:1.500"/>
<circle cx="463" cy="51" r="6.700" fill="#bdbdbd"/><path d="M463 47v8M459 51h8" stroke="#4f4f4f" stroke-width="1.500"/>
<!-- open -->
<path class="f" d="M479 52V33.500q0-2 2-2h6l2.500 3h5v3h-12l-3.500 13zM481.500 52.500l4-14h20l-4.500 14z"/>
<path class="i" d="M491.500 36.500v-3q0-4 4-4h6M498.500 26l3.500 3.500-3.500 3.500" style="stroke-width:1.500"/>
<!-- save dim -->
<g class="d" style="stroke-width:1.500"><path d="M520 37l-6 10.500v3q0 2 2 2h23q2 0 2-2v-3L535 37M527.500 27.500v13M523 36.500l4.500 4.500 4.500-4.500"/></g><rect x="515" y="46.500" width="25" height="4.500" class="df"/>
<path d="M550.500 37.800l5.300 5.500 5.300-5.500" fill="none" stroke="#c8c8c8" stroke-width="1.500"/>
<!-- undo / redo dim -->
<g class="d" style="stroke-width:1.500"><path d="M592 34.500h9q7.500 0 7.500 8t-7.500 8h-13"/><path d="M623 50.500h13q-13 0-13 0M640 34.500h-9q-7.500 0-7.500 8t7.500 8h13" /></g>
<path class="df" d="M585 34.500l8-6.500v13zM645.500 34.500l-8-6.500v13z"/>
<!-- clear (sunburst) -->
<g stroke="#d0d0d0" stroke-width="1.900" stroke-linecap="round">
<path d="M682.500 27.200v5M682.500 49.200v5M669 40.700h5M691 40.700h5M673 31.200l3.500 3.500M688.500 46.700l3.500 3.500M673 50.200l3.500-3.500M688.500 34.700l3.500-3.500M677.300 28.200l1.900 4.600M685.800 48.600l1.900 4.600M670 35.500l4.600 1.900M690.400 44l4.600 1.900M670 45.900l4.600-1.900M690.400 37.400l4.600-1.900M677.300 53.200l1.900-4.600M685.800 32.800l1.900-4.600"/>
</g>
<!-- clear outside dim -->
<rect x="708" y="29" width="17" height="18" fill="#5c5c5c" stroke="#7d7d7d" stroke-width="1.300" stroke-dasharray="2.500 2"/>
<g stroke="#6e6e6e" stroke-width="1.300" stroke-linecap="round"><path d="M728 38l3 -1M728.500 44l3 1M727 49l2.500 2.500M722 51l1 3M716 51l-1 3"/></g>
<!-- fill -->
<path class="f" d="M757 27.500L771 42L757.500 54Q756.500 54.500 755.500 54L747 45.500Q745 44 745 47Q745 50 743.500 50Q742 50 742 45Q742 40 746.500 38z"/>
<path d="M757 30.500L750.500 37h13z" fill="#4f4f4f"/>
<!-- transform -->
<rect x="783.500" y="34.300" width="19.200" height="18" class="i" style="stroke-width:1.600"/><path class="i" d="M793 34v-6" style="stroke-width:1.600"/>
<g class="f"><circle cx="793" cy="28" r="1.900"/><circle cx="783.500" cy="34.300" r="1.900"/><circle cx="802.700" cy="34.300" r="1.900"/><circle cx="783.500" cy="52.300" r="1.900"/><circle cx="802.700" cy="52.300" r="1.900"/><circle cx="793" cy="34.300" r="1.600"/><circle cx="793" cy="52.300" r="1.600"/><circle cx="783.500" cy="43.300" r="1.600"/><circle cx="802.700" cy="43.300" r="1.600"/></g>
<!-- deselect dim -->
<rect x="830.500" y="29" width="23" height="23" class="d" style="stroke-width:1.300;stroke-dasharray:3 2"/><path class="d" d="M828.500 27l26.500 26.500" style="stroke-width:1.300"/>
<!-- invert dim -->
<path class="d" d="M889.500 29h-22.500v23" style="stroke-width:1.300;stroke-dasharray:3 2"/><path class="df" d="M890.500 30v22.500h-22z"/><path class="d" d="M866.500 52.500l23-23" style="stroke-width:1;stroke-dasharray:2.500 1.500;stroke:#4f4f4f"/>
<!-- border dim -->
<rect x="903.500" y="28.500" width="23" height="24" rx="3" class="d" style="stroke-width:1.300"/><rect x="907" y="32.500" width="16" height="16" class="d" style="stroke-width:1.200;stroke-dasharray:3 2"/>
<!-- snap ruler -->
<g stroke="#d4d8e2" fill="none" stroke-width="1.500" stroke-linejoin="round"><path d="M953 31v21h17.500"/><path d="M953 31l17.500 21" stroke-width="1" opacity=".600"/></g>
<path d="M964.500 41l2.500-5.500 8.500-8.500q1.500-1.200 2.800 0t0 2.800l-8.500 8.500z" fill="#d4d8e2"/><path d="M962.500 43l2-2.500 1 1z" fill="#d4d8e2"/>
<!-- snap special -->
<g stroke="#d4d8e2" fill="none" stroke-width="1.400"><path d="M987.500 41.500a13.500 12 0 0 0 27 0"/><path d="M987.500 41.500h27" stroke-width="1" opacity=".600"/></g>
<path d="M1001 41l2.500-5.500 8.500-8.500q1.500-1.200 2.800 0t0 2.800l-8.500 8.500z" fill="#d4d8e2"/><path d="M999 43l2-2.500 1 1z" fill="#d4d8e2"/>
<!-- snap grid -->
<g stroke="#8a8a8a" stroke-width="1" fill="none"><path d="M1023.500 41.500h28.500M1023.500 51h28.500M1029.500 32v23M1043 40v15"/></g>
<path d="M1029 51.500V42h10" fill="none" stroke="#c8c8c8" stroke-width="1.600"/><path d="M1029 51.300h23" stroke="#c8c8c8" stroke-width="1.600"/>
<path d="M1038.500 41l2.500-5.500 8.500-8.500q1.500-1.200 2.800 0t0 2.800l-8.500 8.500z" class="f"/><path d="M1036.500 43l2-2.500 1 1z" class="f"/>
<!-- phone -->
<rect x="1076.800" y="26.500" width="18.500" height="28.500" rx="2" class="i" style="stroke-width:1.600"/><rect x="1076.800" y="50.500" width="18.500" height="4.500" class="f"/>
<g class="f"><rect x="1080" y="29.500" width="2.500" height="2.500"/><rect x="1083.500" y="29.500" width="2.500" height="2.500"/><rect x="1087" y="29.500" width="2.500" height="2.500"/><rect x="1090.500" y="29.500" width="2.500" height="2.500"/><rect x="1080" y="33" width="2.500" height="2.500"/><rect x="1083.500" y="33" width="2.500" height="2.500"/><rect x="1087" y="33" width="2.500" height="2.500"/><rect x="1080" y="36.500" width="2.500" height="2.500"/><rect x="1083.500" y="36.500" width="2.500" height="2.500"/><rect x="1087" y="36.500" width="2.500" height="2.500"/><rect x="1090.500" y="36.500" width="2.500" height="2.500"/><rect x="1080" y="40" width="2.500" height="2.500"/><rect x="1083.500" y="40" width="2.500" height="2.500"/><rect x="1080" y="43.500" width="2.500" height="2.500"/></g>
<!-- help -->
<path class="i" d="M1142.500 30.800a12.300 12.300 0 1 0 4.300 5.200M1127.500 50.300l-4 3.200 7.500-1.200" style="stroke-width:1.900"/>
<path class="i" d="M1142.500 34l6-5.800M1144 27.800h4.800v4.800" style="stroke-width:1.700"/>
<text x="1129.700" y="47.800" font-size="20" font-weight="bold" textLength="12.200" lengthAdjust="spacingAndGlyphs" style="fill:#c6c6c6">?</text>
<!-- ===== tab bar ===== -->
<rect x="385" y="60" width="1385.500" height="30.500" fill="#383838"/>
<rect x="385" y="61" width="153.300" height="29.300" fill="#67748f"/><rect x="385" y="60.500" width="153.300" height="1" fill="#2c3450"/>
<text x="392.300" y="83.300" font-size="15.500" textLength="98.500" lengthAdjust="spacingAndGlyphs" style="fill:#e4e6ee">尾谷木キー.psd</text>
<path d="M517.200 71.200l10.400 10.400M527.600 71.200l-10.400 10.400" stroke="#e0e3ec" stroke-width="1.400"/>
<use href="#dn" x="1761" y="75.500"/>
<!-- ===== canvas area ===== -->
<rect x="385.500" y="90.300" width="1367" height="1079" fill="#2d2d2d"/>
<rect x="773.600" y="334.800" width="591" height="591.400" fill="url(#chk)"/>
<path d="M849.1 534.4C850.4 533.4 853.0 529.9 856.8 528.6C860.6 527.3 867.0 526.2 872.1 526.7C877.2 527.2 883.6 529.3 887.5 531.5C891.4 533.7 893.8 536.8 895.2 540.1C896.6 543.5 896.0 549.7 896.1 551.6C901.7 552.9 924.1 558.0 929.7 559.3C936.7 555.8 960.7 542.5 971.9 538.2C983.1 533.9 992.7 534.2 996.9 533.4C1000.7 528.4 1015.9 512.1 1019.9 503.6C1023.9 495.1 1019.6 487.9 1020.9 482.5C1022.2 477.1 1023.9 474.0 1027.6 471.0C1031.3 468.0 1038.5 466.4 1043.0 464.3C1047.5 462.2 1050.8 459.5 1054.5 458.5C1058.2 457.5 1061.3 457.2 1065.0 458.5C1068.7 459.8 1073.3 463.1 1076.5 466.2C1079.7 469.2 1082.2 472.8 1084.1 476.8C1086.0 480.8 1086.5 487.3 1088.0 490.2C1089.5 493.1 1092.0 493.4 1092.8 494.0C1094.2 491.8 1097.4 485.2 1101.4 480.6C1105.4 476.0 1111.0 469.9 1116.8 466.2C1122.6 462.5 1129.6 459.9 1136.0 458.5C1142.4 457.1 1148.2 456.6 1155.2 457.6C1162.2 458.6 1171.8 460.5 1178.2 464.3C1184.6 468.1 1189.4 475.3 1193.6 480.6C1197.8 485.9 1201.3 491.7 1203.2 496.0C1205.1 500.3 1204.8 504.8 1205.1 506.5C1209.6 509.2 1222.6 516.5 1231.9 522.8C1241.2 529.0 1255.9 540.5 1260.7 544.0C1265.5 543.7 1281.5 541.4 1289.5 542.0C1297.5 542.6 1302.3 544.3 1308.7 547.8C1315.1 551.3 1322.5 557.4 1327.9 563.1C1333.4 568.9 1338.2 575.9 1341.4 582.3C1344.6 588.7 1346.1 595.1 1347.1 601.5C1348.0 607.9 1347.7 614.3 1347.1 620.7C1346.5 627.1 1345.9 633.9 1343.3 639.9C1340.7 645.9 1336.2 652.3 1331.7 656.5C1327.2 660.7 1321.2 662.9 1316.4 665.1C1311.6 667.3 1305.2 669.1 1303.0 669.9C1302.5 673.7 1302.3 686.0 1300.1 692.9C1297.8 699.8 1291.3 708.2 1289.5 711.2C1290.6 713.9 1294.9 721.9 1296.2 727.5C1297.5 733.1 1298.0 738.7 1297.2 744.8C1296.4 750.9 1294.3 758.7 1291.4 764.0C1288.5 769.3 1284.4 773.4 1279.9 776.4C1275.4 779.4 1270.0 781.2 1264.6 782.2C1259.2 783.2 1252.8 783.0 1247.3 782.2C1241.8 781.4 1234.5 778.2 1231.9 777.4C1228.7 779.0 1220.7 783.5 1212.7 787.0C1204.7 790.5 1195.1 795.1 1183.9 798.5C1172.7 801.9 1160.0 805.0 1145.6 807.1C1131.2 809.2 1112.0 810.7 1097.6 811.0C1083.2 811.3 1070.5 810.2 1059.2 809.1C1047.9 808.0 1040.8 806.7 1029.5 804.3C1018.1 801.9 1000.7 797.9 991.1 794.7C981.5 791.5 977.6 788.5 971.9 785.1C966.1 781.7 959.1 776.3 956.6 774.5C951.5 775.9 936.1 780.7 925.9 783.1C915.7 785.5 905.1 787.8 895.2 788.9C885.3 790.0 874.7 790.5 866.4 789.9C858.1 789.3 852.3 787.8 845.3 785.1C838.2 782.4 830.5 778.1 824.1 773.6C817.7 769.1 811.7 764.0 806.9 758.2C802.1 752.4 798.1 746.0 795.4 739.0C792.7 732.0 790.9 723.0 790.6 716.0C790.3 709.0 791.3 702.6 793.4 696.8C795.5 691.0 798.8 685.9 803.0 681.4C807.2 676.9 812.6 672.6 818.4 669.9C824.2 667.2 831.2 665.6 837.6 665.1C844.0 664.6 851.0 665.6 856.8 667.0C862.5 668.4 866.7 670.7 872.1 673.7C877.5 676.8 886.5 683.4 889.4 685.3C888.1 684.0 884.6 681.5 881.7 677.6C878.8 673.8 875.0 668.3 872.1 662.2C869.2 656.1 867.0 648.7 864.5 641.1C862.0 633.5 858.7 623.8 856.8 616.9C854.9 610.0 853.5 602.5 852.9 599.6C850.7 599.3 843.3 598.7 839.5 597.7C835.7 596.8 832.8 596.8 829.9 593.9C827.0 591.0 824.1 583.9 822.2 580.4C820.3 576.9 819.4 575.9 818.4 572.7C817.4 569.5 816.7 565.4 816.5 561.2C816.3 557.1 816.1 551.8 817.4 547.8C818.7 543.8 820.7 539.8 824.1 537.2C827.5 534.6 833.4 532.9 837.6 532.4C841.8 531.9 847.2 534.1 849.1 534.4z" fill="#fff" stroke="#505050" stroke-width="2.800" stroke-linejoin="round"/>
<g fill="none" stroke="#151515" stroke-width="1.500" stroke-linecap="round" stroke-linejoin="round">
<path d="M889.4 574.7C893.2 575.4 903.7 577.6 912.0 579.0C920.3 580.4 934.8 582.6 939.3 583.3C941.2 581.4 946.8 575.4 951.0 572.0C955.2 568.6 958.2 565.9 964.3 563.1C970.3 560.4 979.6 556.9 987.3 555.5C995.0 554.1 1006.5 554.7 1010.3 554.5C1012.2 551.1 1017.4 541.1 1021.9 534.4C1026.4 527.7 1034.7 517.6 1037.2 514.2"/>
<path d="M1051.5 513.2C1052.5 514.2 1055.0 515.5 1057.3 519.0C1059.5 522.5 1062.9 528.6 1065.0 534.4C1067.1 540.2 1069.2 547.7 1069.8 553.6C1070.4 559.5 1069.0 567.2 1068.8 569.9C1070.5 570.7 1077.5 573.9 1079.3 574.7C1080.8 572.8 1084.0 567.3 1088.0 563.1C1092.0 558.9 1097.5 554.2 1103.3 549.7C1109.0 545.2 1119.3 538.5 1122.5 536.3C1120.8 533.4 1113.4 525.1 1112.0 519.0C1110.6 512.9 1111.8 505.6 1113.9 499.8C1116.0 494.1 1119.5 488.2 1124.5 484.5C1129.5 480.8 1137.2 478.0 1143.6 477.7C1150.0 477.4 1157.0 479.4 1162.8 482.5C1168.6 485.6 1174.5 491.2 1178.2 496.0C1181.9 500.8 1184.6 506.5 1184.9 511.3C1185.2 516.1 1180.9 522.5 1180.1 524.8C1185.5 527.0 1202.5 532.8 1212.7 538.2C1222.9 543.6 1234.1 551.6 1241.5 557.4C1248.9 563.1 1254.3 570.2 1256.9 572.7C1259.1 571.3 1264.9 565.7 1270.3 564.1C1275.7 562.5 1283.1 561.7 1289.5 563.1C1295.9 564.5 1303.6 568.5 1308.7 572.7C1313.8 576.9 1317.3 582.3 1320.2 588.1C1323.1 593.9 1325.3 600.9 1326.0 607.3C1326.7 613.7 1325.4 622.1 1324.1 626.5C1322.8 630.9 1321.2 630.3 1318.3 633.4C1315.4 636.5 1311.6 642.1 1306.8 645.0C1302.0 647.9 1293.8 649.8 1289.5 650.7C1285.2 651.7 1282.3 650.7 1280.9 650.7C1281.2 653.6 1283.3 662.2 1282.8 668.0C1282.3 673.8 1280.4 679.2 1278.0 685.3C1275.6 691.4 1271.4 699.1 1268.4 704.5C1265.4 709.9 1261.2 715.7 1259.8 717.9C1261.5 718.7 1267.3 719.8 1270.3 722.7C1273.3 725.6 1277.3 730.6 1278.0 735.2C1278.7 739.8 1276.8 746.2 1274.2 750.5C1271.6 754.8 1266.8 759.2 1262.6 761.1C1258.4 763.0 1253.3 762.8 1249.2 762.0C1245.1 761.2 1240.4 758.2 1237.7 756.3C1235.0 754.4 1233.7 751.5 1232.9 750.5C1229.5 752.8 1220.9 759.7 1212.7 764.0C1204.5 768.3 1195.1 772.7 1183.9 776.4C1172.7 780.1 1160.0 783.6 1145.6 786.0C1131.2 788.4 1112.0 790.5 1097.6 790.8C1083.2 791.1 1072.2 789.6 1059.2 788.0C1046.2 786.4 1031.2 783.9 1019.9 781.2C1008.5 778.5 999.1 775.1 991.1 771.6C983.1 768.1 977.2 763.6 971.9 760.1C966.6 756.6 961.6 752.1 959.5 750.5C957.4 751.3 952.6 753.4 947.0 755.3C941.4 757.2 933.3 759.9 925.9 762.0C918.5 764.1 910.5 766.5 902.8 767.8C895.1 769.1 886.8 769.7 879.8 769.7C872.8 769.7 866.2 769.1 860.6 767.8C855.0 766.5 848.6 763.0 846.2 762.0"/>
<path d="M872.1 584.3C872.8 588.1 874.4 600.0 876.0 607.3C877.6 614.6 880.1 622.7 882.0 628.0C883.9 633.3 885.0 634.1 887.5 639.2C890.0 644.3 893.6 652.6 897.1 658.4C900.6 664.1 906.7 671.2 908.6 673.7C908.8 676.0 908.6 682.4 909.6 687.2C910.6 692.0 912.6 698.5 914.4 702.5C916.1 706.5 919.1 709.8 920.1 711.2C917.5 711.2 910.2 711.7 904.8 711.2C899.4 710.7 891.1 709.1 887.5 708.3C883.9 707.5 883.8 706.8 883.0 706.5"/>
<path d="M990.2 664.1C988.5 666.8 983.0 674.5 980.0 680.0C977.0 685.5 974.5 691.5 972.5 697.0C970.5 702.5 968.8 710.4 968.1 713.1"/>
<path d="M990.2 664.1C989.0 666.9 984.8 675.2 983.0 681.0C981.2 686.8 980.2 693.2 979.5 699.0C978.8 704.8 978.8 713.2 978.7 716.0"/>
<path d="M1013.2 702.5C1015.9 704.4 1022.0 711.0 1029.5 714.0C1037.0 717.0 1048.5 719.7 1058.3 720.8C1068.0 721.9 1080.8 720.2 1088.0 720.8C1095.2 721.4 1097.9 722.5 1101.4 724.6C1104.9 726.7 1107.5 730.2 1109.1 733.2C1110.7 736.2 1111.5 739.3 1111.0 742.8C1110.5 746.3 1109.1 751.2 1106.2 754.4C1103.3 757.6 1099.9 759.9 1093.7 762.0C1087.5 764.1 1078.4 765.8 1068.8 766.8C1059.2 767.8 1041.6 767.6 1036.2 767.8"/>
<path d="M1105.3 723.6C1108.8 722.6 1118.1 720.0 1126.4 717.9C1134.7 715.8 1147.2 713.4 1155.2 711.2C1163.2 709.0 1170.1 706.1 1174.4 704.5C1178.7 702.9 1180.0 702.1 1181.1 701.6"/>
<path d="M1107.2 754.4C1109.4 755.7 1115.2 760.1 1120.6 762.0C1126.0 763.9 1133.4 765.2 1139.8 765.9C1146.2 766.5 1154.4 765.6 1159.0 765.9C1163.6 766.2 1166.2 767.5 1167.6 767.8"/>
</g>
<path d="M883.6 707.3C884.2 709.4 886.9 717.7 887.5 719.8C885.9 719.6 879.5 719.0 877.9 718.8C879.0 720.2 883.5 726.0 884.6 727.5C882.8 727.3 875.8 726.7 874.0 726.5C874.8 728.1 878.0 734.5 878.8 736.1C877.0 735.8 870.0 734.5 868.3 734.2C869.4 735.6 873.9 741.4 875.0 742.8C873.7 742.5 868.6 741.2 867.3 740.9C868.1 742.2 871.3 747.3 872.1 748.6C869.5 749.6 859.3 753.4 856.8 754.4C857.1 755.5 858.4 760.0 858.7 761.1C856.6 761.2 848.3 761.9 846.2 762.0C843.2 760.1 833.0 755.0 828.0 750.5C823.0 746.0 819.2 741.0 816.5 735.2C813.8 729.5 811.5 722.0 811.7 716.0C812.0 710.0 813.7 703.8 818.0 699.0C822.3 694.2 831.1 688.7 837.6 687.2C844.1 685.7 850.4 687.8 856.8 690.0C863.2 692.2 871.5 697.7 876.0 700.6C880.5 703.5 882.3 706.2 883.6 707.3z" fill="#000"/>
<g stroke="#000" stroke-width="7.200" fill="none" stroke-linecap="butt"><path d="M877 577L840 557.500M878 578L842.500 572.500M878 577L870 548.500"/><path d="M1047.500 512L1045 488M1048 512L1060.500 481.500M1049 512L1065.500 495"/></g>
<path d="M868 566L889.500 574.500L873 585z" fill="#000"/><path d="M1040 512.500L1055 512.500L1050 500z" fill="#000"/>
<g fill="#111">
<circle cx="976.7" cy="666.6" r="1.100"/>
<circle cx="971.9" cy="677.2" r="1.100"/>
<circle cx="968.1" cy="692" r="1.100"/>
<circle cx="964.6" cy="706.8" r="1.100"/>
<circle cx="991.1" cy="674.7" r="1.100"/>
<circle cx="988.3" cy="684.3" r="1.100"/>
<circle cx="984.4" cy="694.9" r="1.100"/>
<circle cx="982.5" cy="708.7" r="1.100"/>
<circle cx="1067.5" cy="608.5" r=".700"/>
<circle cx="1071.5" cy="611.5" r=".700"/>
<circle cx="1076" cy="612" r=".700"/>
<circle cx="1069" cy="600.5" r=".700"/>
<circle cx="1077" cy="602" r=".700"/>
</g>
<path d="M1095.700 591C1099 585 1103 581.500 1107.200 581.400C1112 582 1116 584.500 1118.700 587.100C1114 585.500 1110 585 1106.500 585.500C1102 586.500 1098.500 588.500 1095.700 591z" fill="#111"/>
<path d="M1067.500 604.500l8 1.500M1070.500 603.500q4 3 6 7" fill="none" stroke="#222" stroke-width=".800" stroke-linecap="round"/>
<g fill="none" stroke="#c45c9c" stroke-width="1.100"><circle cx="1096" cy="452.200" r="41.700"/><circle cx="1096" cy="452.200" r="15.400"/></g>
<g fill="none" stroke="#e6b6d4" stroke-width="1" opacity=".700"><circle cx="1096" cy="452.200" r="42.700"/><circle cx="1096" cy="452.200" r="16.400"/></g>
<!-- ===== scrollbars & bottom ===== -->
<rect x="1752" y="90.300" width="18.300" height="1079" fill="#434343"/>
<rect x="1752.300" y="91.700" width="17.700" height="17.500" fill="#585858"/><use href="#up" x="1761.200" y="100.800"/>
<rect x="1752.300" y="1151" width="17.700" height="18" fill="#585858"/><use href="#dn" x="1761.200" y="1159.700"/>
<rect x="1753.700" y="377" width="15.200" height="504" rx="7.600" fill="#5b5b5b"/>
<rect x="385.500" y="1169.200" width="1384.800" height="18.200" fill="#404040"/>
<rect x="1752.300" y="1169.200" width="18" height="18.200" fill="#4c4c4c"/>
<rect x="1734" y="1169.200" width="18.300" height="18.200" fill="#585858"/><path d="M1741 1173.500l4.700 4.800-4.700 4.800" fill="none" stroke="#b8b8b8" stroke-width="1.500"/>
<rect x="876.200" y="1169.200" width="17" height="18.200" fill="#4e4e4e"/><path d="M887 1173.500l-4.700 4.800 4.700 4.800" fill="none" stroke="#b8b8b8" stroke-width="1.500"/>
<rect x="1098" y="1171" width="430.300" height="15.400" rx="7.700" fill="#5c5c5c"/>
<rect x="385.500" y="1169.200" width="490.700" height="18.200" fill="#3b3b3b"/>
<!-- zoom field -->
<rect x="387.300" y="1169.700" width="84.700" height="17.300" fill="#3a3a3a" stroke="#787878" stroke-width="1"/>
<path d="M433 1186.500L471.500 1178v8.500z" fill="#505050"/>
<text x="389.400" y="1185.800" font-size="16.500" textLength="39.500" lengthAdjust="spacingAndGlyphs" style="fill:#e6e6e6">100.0</text>
<rect x="477.500" y="1169.700" width="60.400" height="17.300" fill="#474747" stroke="#787878" stroke-width="1"/>
<path d="M478 1186.500L537.400 1172.500v14z" fill="#2c2c2c"/>
<rect x="472" y="1169.700" width="5.500" height="17.300" fill="#5a5a5a"/>
<path d="M548 1178.500h12M579.500 1178.500h12M585.500 1172.500v12" stroke="#b4b4b4" stroke-width="1.400"/>
<rect x="610.500" y="1174" width="9" height="9" fill="#b4b4b4"/>
<rect x="632.300" y="1169.700" width="71.700" height="17.300" fill="#3a3a3a" stroke="#787878" stroke-width="1"/>
<path d="M672 1186.500L703.500 1179v7.500z" fill="#505050"/>
<text x="637.500" y="1185.800" font-size="16.500" textLength="23.500" lengthAdjust="spacingAndGlyphs" style="fill:#e6e6e6">0.0</text>
<rect x="704" y="1169.700" width="6" height="17.300" fill="#5a5a5a"/>
<rect x="710.300" y="1169.700" width="72" height="17.300" fill="#2c2c2c" stroke="#787878" stroke-width="1"/>
<path d="M711 1186.500V1174C722 1171 734 1170.300 746 1170.300C760 1170.500 772 1178 782 1186.500z" fill="#484848"/>
<g fill="none" stroke="#b4b4b4" stroke-width="1.500"><path d="M806 1183a5.500 5.500 0 1 0-11-1"/><path d="M822 1182a5.500 5.500 0 1 1 11 1"/><path d="M860 1172v6M855.500 1173.500a7 7 0 1 0 9 0"/></g>
<path d="M791.500 1180l3.500 4.500 3.500-4.500zM829.500 1181l3.500 4.500 3.500-4.500z" fill="#b4b4b4"/><circle cx="860" cy="1179.500" r="2" fill="#b4b4b4"/>
<!-- bottom timeline bar -->
<rect x="385.500" y="1187.400" width="1385" height="61.300" fill="#383838"/>
<rect x="420.600" y="1193.400" width="59" height="51" fill="#4b4b4b"/>
<g fill="none" stroke="#c0c0c0" stroke-width="1.300"><rect x="438" y="1207.500" width="23.500" height="23" rx="2"/><path d="M443 1207.500v23M456.500 1207.500v23"/></g>
<path d="M449.700 1211l3 3.500-3 3.500-3-3.500zM449.700 1220l3 3.500-3 3.500-3-3.500z" fill="#c0c0c0"/>
<g fill="none" stroke="#8c8c8c" stroke-width="1.400"><path d="M395.500 1203l5.500-6 5.500 6M395.500 1230.500l5.500 6 5.500-6M395.500 1237l5.500 6 5.500-6"/></g>
<rect x="386" y="1169.600" width="3.500" height="18" fill="#5a5a5a" opacity="0"/>
<rect x="0" y="1248.700" width="1916" height="1.300" fill="#cdcdcd"/>
<!-- ===== right icon dock ===== -->
<rect x="1770.300" y="21" width="146" height="1228" fill="#393939"/>
<g stroke="#8a8a8a" stroke-width="1.500" fill="none"><path d="M1785 30.500l-5.500 6 5.500 6M1814.500 30.500l5.500 6-5.500 6M1821.500 30.500l5.500 6-5.500 6"/></g>
<g stroke="#6f6f6f" stroke-width="1" fill="none"><path d="M1837.500 27v18M1840.500 27v18M1843.500 27v18"/></g>
<defs><g id="fold"><path d="M0 3.200V2q0-2 2-2h7.500q1.500 0 2.300 1.200l1.200 1.800h13q2 0 2 2v17.300q0 2-2 2h-24q-2 0-2-2z" fill="none" stroke="#bdbdbd" stroke-width="1.500" stroke-linejoin="round"/><path d="M0 3.500V2q0-2 2-2h7.500q1.500 0 2.300 1.200l1.600 2.300z" fill="#bdbdbd"/></g></defs>
<rect x="1773.700" y="53.7" width="54.700" height="47" fill="#4c4c4c"/>
<rect x="1773.700" y="105.7" width="54.700" height="47" fill="#4c4c4c"/>
<use href="#fold" x="1787.100" y="117.2"/>
<rect x="1773.700" y="157.7" width="54.700" height="47" fill="#4c4c4c"/>
<use href="#fold" x="1787.100" y="169.2"/>
<rect x="1773.700" y="209.7" width="54.700" height="47" fill="#4c4c4c"/>
<use href="#fold" x="1787.100" y="221.2"/>
<rect x="1773.700" y="261.7" width="54.700" height="47" fill="#4c4c4c"/>
<use href="#fold" x="1787.100" y="273.2"/>
<rect x="1773.700" y="313.7" width="54.700" height="47" fill="#4c4c4c"/>
<use href="#fold" x="1787.100" y="325.2"/>
<rect x="1773.700" y="365.7" width="54.700" height="47" fill="#4c4c4c"/>
<use href="#fold" x="1787.100" y="377.2"/>
<rect x="1773.700" y="417.7" width="54.700" height="47" fill="#4c4c4c"/>
<use href="#fold" x="1787.100" y="429.2"/>
<rect x="1773.700" y="469.7" width="54.700" height="47" fill="#4c4c4c"/>
<use href="#fold" x="1787.100" y="481.2"/>
<rect x="1773.700" y="521.7" width="54.700" height="47" fill="#4c4c4c"/>
<use href="#fold" x="1787.100" y="533.2"/>
<rect x="1773.700" y="573.7" width="54.700" height="47" fill="#4c4c4c"/>
<use href="#fold" x="1787.100" y="585.2"/>
<circle cx="1801.100" cy="77.700" r="12.300" fill="none" stroke="#c4c4c4" stroke-width="1.700"/>
<path d="M1797.300 73.200l8.300 1.200-6.800 7z" fill="#c4c4c4"/><path d="M1801.500 77.500l11.500 11.500h3" fill="none" stroke="#c4c4c4" stroke-width="2.700"/>
<g transform="translate(1801.1,130.8)" fill="#8f8f8f" stroke="#bdbdbd" stroke-width="1"><path d="M0 0C-1-6-5.500-8.500-9.500-8C-10-4-6.500 0 0 0z"/><path d="M0 0C1-6 5.500-8.500 9.500-8C10-4 6.500 0 0 0z"/><path d="M0 0C-1 6-5.500 8.500-9.500 8C-10 4-6.500 0 0 0z"/><path d="M0 0C1 6 5.500 8.500 9.500 8C10 4 6.500 0 0 0z"/></g>
<rect x="1793.6" y="175.8" width="15" height="14.500" fill="#8f8f8f" stroke="#bdbdbd" stroke-width="1"/><path d="M1797.6 190.3v-5l3.500-3 3.500 3v5h-2v-4h-3v4z" fill="#e0e0e0"/>
<g transform="translate(1801.1,234.8)" fill="#bdbdbd"><path d="M0 0C-1-6.500-5.500-9-10-8.500C-10.500-4-6.500 0 0 0z"/><path d="M0 0C1-6.500 5.500-9 10-8.500C10.500-4 6.500 0 0 0z"/><path d="M0 0C-1 6.500-5.500 9-10 8.500C-10.500 4-6.500 0 0 0z"/><path d="M0 0C1 6.500 5.500 9 10 8.500C10.500 4 6.500 0 0 0z"/></g>
<g fill="#c4c4c4"><circle cx="1794.7" cy="280.4" r="1.100"/><circle cx="1794.7" cy="286.8" r="1.100"/><circle cx="1794.7" cy="293.2" r="1.100"/><circle cx="1797.9" cy="283.6" r="1.100"/><circle cx="1797.9" cy="290.1" r="1.100"/><circle cx="1801.1" cy="280.4" r="1.100"/><circle cx="1801.1" cy="286.8" r="1.100"/><circle cx="1801.1" cy="293.2" r="1.100"/><circle cx="1804.3" cy="283.6" r="1.100"/><circle cx="1804.3" cy="290.1" r="1.100"/><circle cx="1807.5" cy="280.4" r="1.100"/><circle cx="1807.5" cy="286.8" r="1.100"/><circle cx="1807.5" cy="293.2" r="1.100"/></g>
<g fill="none" stroke="#c4c4c4" stroke-width="1.300"><rect x="1793.6" y="331.8" width="15" height="14" rx="1"/><path d="M1793.6 335.8h15M1802.1 335.8v10M1793.6 340.8h8.500"/></g>
<g transform="translate(1801.1,390.8)" fill="#c4c4c4"><path d="M-8-7l5.500 4-1.200 1.200zM8-7l-5.500 4 1.200 1.200zM-8 7l5.500-4-1.200-1.200zM8 7l-5.500-4 1.200-1.200zM0-8.500l1 5h-2zM0 8.500l1-5h-2zM-9.500 0l5-1v2zM9.500 0l-5-1v2z"/></g>
<rect x="1793.6" y="435.8" width="15" height="14" rx="1.500" fill="none" stroke="#c4c4c4" stroke-width="1.300"/><path d="M1795.1 448.3l3.500-5 2.500 2.500 3-4 3 6.500z" fill="#9a9a9a"/>
<path d="M1804.1 488.3h-9q-1.500 0-1.500 1.500v10q0 1.500 1.500 1.500h10q1.500 0 1.500-1.500v-8" fill="none" stroke="#c4c4c4" stroke-width="1.300"/><path d="M1798.6 497.8l1-3.500 8.500-8.500 2.500 2.500-8.500 8.500z" fill="#c4c4c4"/>
<g transform="translate(1801.1,546.9)"><path d="M0-8l7.500 4v8.500l-7.500 4-7.500-4v-8.500z" fill="none" stroke="#c4c4c4" stroke-width="1.300" stroke-linejoin="round"/><path d="M0 0l7.500-4v8.500l-7.500 4z" fill="#8a8a8a"/><path d="M-7.500-4l7.500 4 7.500-4M0 0v8.500" fill="none" stroke="#c4c4c4" stroke-width="1.100"/></g>
<g transform="translate(1801.1,598.9)" fill="#c4c4c4"><circle cx="0" cy="-6.500" r="2"/><path d="M-7.500-3.500h15v2l-5 1v3.500l2.500 7h-2.200l-2.800-6-2.800 6h-2.200l2.500-7v-3.500l-5-1z"/></g>
<!-- ===== right panels ===== -->
<!-- navigator -->
<rect x="1832.700" y="51" width="84" height="3.400" fill="#313131"/>
<rect x="1832.700" y="54.400" width="84" height="31.600" fill="#515151"/>
<rect x="1832.700" y="53.900" width="25.200" height="24" fill="#353535"/>
<use href="#ham" x="1840" y="61.100"/>
<rect x="1869.800" y="66.200" width="16.500" height="12.800" rx="2.200" fill="none" stroke="#c8c8c8" stroke-width="1.600"/>
<rect x="1873.500" y="62.200" width="16" height="13" rx="2.200" fill="#515151" stroke="#c8c8c8" stroke-width="1.600"/><rect x="1875.600" y="64.300" width="11.800" height="8.800" fill="#8c8c8c"/>
<text x="1901.300" y="76" font-size="14.500" textLength="55" lengthAdjust="spacingAndGlyphs">ナビゲーター</text>
<rect x="1832.700" y="86.300" width="84" height="194.500" fill="#2d2d2d"/>
<rect x="1832.700" y="280.800" width="84" height="63.500" fill="#515151"/>
<rect x="1836.400" y="286.500" width="82" height="23.700" fill="#4e4e4e" stroke="#8a8a8a" stroke-width="1.100"/>
<path d="M1837.500 309.600L1916 296.600V309.600z" fill="#2e2e2e"/>
<rect x="1836.400" y="316.400" width="82" height="24.200" fill="#4e4e4e" stroke="#8a8a8a" stroke-width="1.100"/>
<path d="M1837 317.500C1845 327 1857 339.500 1868 340H1837zM1887 340C1897 338.500 1908 328 1916 322V340z" fill="#2e2e2e"/>
<rect x="1904.400" y="314.400" width="5.400" height="29.300" fill="#6c6c6c" stroke="#9a9a9a" stroke-width=".900"/>
<!-- layer property -->
<rect x="1832.700" y="344.300" width="84" height="3.600" fill="#333"/>
<rect x="1832.700" y="348.200" width="84" height="30.700" fill="#515151"/>
<rect x="1832.700" y="347.700" width="25.200" height="23" fill="#353535"/>
<use href="#ham" x="1840" y="354.900"/>
<g fill="none" stroke="#c6c6c6" stroke-width="1.600" stroke-linejoin="round" stroke-linecap="round"><path d="M1879.300 365.900L1869.900 359.700L1879.800 353.200L1889.600 359.700L1886 362"/><path d="M1870.200 364L1879.300 370.200M1870.200 368.300L1879.300 374.500"/><path d="M1888.800 360.800l-3.200 2.200h3.800" stroke-width="1.200"/></g>
<circle cx="1883.400" cy="368.100" r="1.700" fill="none" stroke="#c6c6c6" stroke-width="1.200"/><circle cx="1889.800" cy="368.100" r="2.300" fill="#b4b4b4"/>
<g fill="#c6c6c6"><rect x="1881.200" y="371.900" width="1.500" height="1.500"/><rect x="1884.100" y="371.900" width="1.500" height="1.500"/><rect x="1882.650" y="373.350" width="1.500" height="1.500"/><rect x="1881.200" y="374.800" width="1.500" height="1.500"/><rect x="1884.100" y="374.800" width="1.500" height="1.500"/></g>
<rect x="1887.800" y="372.100" width="4" height="4" fill="none" stroke="#c6c6c6" stroke-width="1.300"/>
<text x="1901.800" y="370.300" font-size="15.500" textLength="90" lengthAdjust="spacingAndGlyphs">レイヤープロパティ</text>
<rect x="1832.700" y="378.600" width="84" height="259" fill="#3d3d3d"/>
<g fill="#666"><rect x="1835" y="391" width="8" height="1"/><rect x="1882" y="391" width="34" height="1"/><rect x="1835" y="448" width="8" height="1"/><rect x="1900" y="448" width="16" height="1"/></g>
<g font-size="18.200"><text x="1844.600" y="399.400" textLength="35.800" lengthAdjust="spacingAndGlyphs">効果</text><text x="1844.600" y="456.600" textLength="54" lengthAdjust="spacingAndGlyphs">表現色</text></g>
<rect x="1855.500" y="464.500" width="64" height="30" rx="1.500" fill="#5a5a5a" stroke="#707070" stroke-width="1"/>
<!-- layer panel -->
<rect x="1832.700" y="641.500" width="84" height="130" fill="#515151"/>
<rect x="1832.700" y="639.900" width="25.200" height="24.700" fill="#353535"/>
<use href="#ham" x="1840" y="648.300"/>
<g fill="none" stroke="#c6c6c6" stroke-width="1.700" stroke-linejoin="round" stroke-linecap="round"><path d="M1879.800 646.800l9.800 6-9.800 6-9.800-6z"/><path d="M1870 658.300l9.800 5.800 9.800-5.800M1870 663.600l9.800 5.800 9.800-5.800"/></g>
<text x="1901.800" y="663.800" font-size="15.500" textLength="43" lengthAdjust="spacingAndGlyphs">レイヤー</text>
<rect x="1833.800" y="673.500" width="59.700" height="29.800" rx="2" fill="#5f5f5f" stroke="#7c7c7c" stroke-width="1"/>
<rect x="1840.500" y="678.500" width="23.500" height="20" fill="#5a5a5a" stroke="#b0b0b0" stroke-width="1.400"/>
<path d="M1875 685.500l6.500 6.500 6.500-6.500" fill="none" stroke="#cfcfcf" stroke-width="1.600"/>
<rect x="1898" y="673.500" width="22" height="29.800" rx="2" fill="#5f5f5f" stroke="#7c7c7c" stroke-width="1"/>
<rect x="1884.300" y="719" width="13.700" height="12.200" rx="2.500" fill="#8a8a8a"/><rect x="1889.300" y="716" width="10.700" height="9.600" rx="2" fill="#c8c8c8"/><rect x="1890" y="710.800" width="15.500" height="15.500" rx="3.500" fill="none" stroke="#dcdcdc" stroke-width="1.600" stroke-dasharray="3 2.200"/>
<path d="M1915 711.500v2.500M1915 718.500v2.500" stroke="#c8c8c8" stroke-width="1.500"/>
<g fill="none" stroke="#c4c4c4" stroke-width="1.500"><rect x="1837.800" y="744.200" width="19.800" height="18.300" rx="2.200"/><path d="M1837.800 753.300h19.800"/><path d="M1840.500 747.500h3M1840.500 750h3M1840.500 756.500h3M1840.500 759h3" stroke-width="1.100"/></g>
<!-- layer rows -->
<rect x="1832.700" y="771" width="84" height="175.500" fill="#3d3d3d"/>
<rect x="1890" y="771.500" width="27" height="43.500" fill="#67748f"/>
<g fill="#242424"><rect x="1832.700" y="770.500" width="84" height="1.700"/><rect x="1832.700" y="814.600" width="84" height="1.700"/><rect x="1832.700" y="858.100" width="84" height="1.700"/><rect x="1832.700" y="901.500" width="84" height="1.700"/><rect x="1832.700" y="945.200" width="84" height="1.700"/><rect x="1861.300" y="771" width="1.700" height="175"/><rect x="1889" y="771" width="1.700" height="175"/></g>
<rect x="1832.700" y="946.500" width="84" height="302.200" fill="#404040"/>
<defs><g id="eye"><path d="M-10.500 2.500C-8-3.500-3.500-6.200 0-6.200S8-3.500 10.500 2.500" fill="none" stroke="#c6c6c6" stroke-width="1.900" stroke-linecap="round"/><circle cx="0" cy=".800" r="4.500" fill="#c6c6c6"/></g></defs>
<use href="#eye" x="1846.700" y="792.700"/><use href="#eye" x="1846.700" y="836.200"/><use href="#eye" x="1846.700" y="879.600"/>
<rect x="1839.700" y="917" width="14.500" height="14.500" rx="1.500" fill="none" stroke="#2a2a2a" stroke-width="1.700"/>
<g fill="none" stroke="#2a2a2a" stroke-width="1.700"><rect x="1868.500" y="829" width="14.500" height="14.500" rx="1.500"/><rect x="1868.500" y="872.500" width="14.500" height="14.500" rx="1.500"/><rect x="1868.500" y="917" width="14.500" height="14.500" rx="1.500"/></g>
<path d="M1866 801l2.300-5.500 11.500-11.500q1.400-1.200 2.700 0t.2 2.700l-11.500 11.500zM1864.500 802.700h20" fill="#c6c6c6" stroke="#c6c6c6" stroke-width="1.400" stroke-linejoin="round"/>
<!-- thumbs -->
<rect x="1900" y="779.500" width="20" height="27" fill="#fff" stroke="#222" stroke-width="1.200"/><rect x="1898.300" y="777.800" width="22" height="30.400" fill="none" stroke="#e6e6e6" stroke-width="1.400"/>
<pattern id="chk4" x="1901" y="780" width="7" height="7" patternUnits="userSpaceOnUse"><rect width="7" height="7" fill="#fff"/><rect x="3.500" width="3.500" height="3.500" fill="#ccc"/><rect y="3.500" width="3.500" height="3.500" fill="#ccc"/></pattern>
<rect x="1901" y="780.500" width="16" height="25" fill="url(#chk4)"/><path d="M1904 792c2-5 8-7 13-6v14c-5 1-10 0-13-3z" fill="#fff"/><circle cx="1904.500" cy="796.500" r="1.300" fill="#111"/>
<rect x="1901" y="824" width="16" height="25" fill="url(#chk4)" stroke="#222" stroke-width="1"/><path d="M1903 836c2-5 8-7 14-6v14c-6 1-11 0-14-3z" fill="#fff"/>
<rect x="1901" y="867.500" width="16" height="25" fill="url(#chk4)" stroke="#222" stroke-width="1"/><path d="M1902.500 881l3-2 1-4 3 3 3-4 2 3h3v10h-13z" fill="#111"/>
<rect x="1901" y="911" width="16" height="25" fill="#fff" stroke="#222" stroke-width="1"/><rect x="1902.500" y="913" width="14" height="4" fill="#e8a0b0"/><rect x="1902.500" y="919" width="14" height="5" fill="#e6e0c0"/><rect x="1902.500" y="926" width="14" height="6" fill="#d8c8a0"/>
</svg>
</body>
</html>
